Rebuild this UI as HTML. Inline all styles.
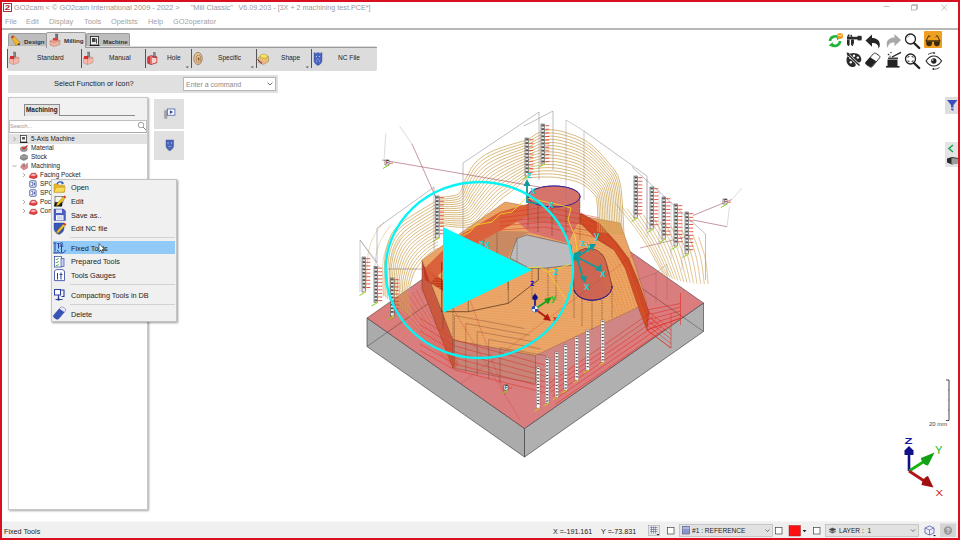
<!DOCTYPE html>
<html>
<head>
<meta charset="utf-8">
<title>GO2cam</title>
<style>
*{box-sizing:border-box;margin:0;padding:0}
html,body{width:960px;height:540px;overflow:hidden;background:#fff}
body{position:relative;font-family:"Liberation Sans","DejaVu Sans",sans-serif;font-size:7px;color:#222}
.abs{position:absolute}
.t{position:absolute;white-space:nowrap;line-height:1}
#frame{position:absolute;left:0;top:0;width:960px;height:540px;border:2px solid #d8101f;border-left-width:2px;pointer-events:none;z-index:50}
#title{left:14px;top:4px;font-size:7.4px;color:#9a9a9a}
.menu{top:17.5px;font-size:7.4px;color:#a2a2a2}
#sep1{left:2px;top:28px;width:956px;height:1.6px;background:#b8b8b8}
.tab{position:absolute;top:33px;height:14px;background:#bdbdbd;border:1px solid #9a9a9a;border-bottom:none;border-radius:2px 2px 0 0;font-size:6.2px;font-weight:bold;color:#333}
.tab span{position:absolute;top:4px;white-space:nowrap}
#toolbar{left:7px;top:46px;width:370px;height:25px;background:#dcdcdc;border-radius:2px}
.tb{position:absolute;top:55px;font-size:6.6px;color:#222;white-space:nowrap;line-height:1}
.tsep{position:absolute;top:49px;width:1px;height:19px;background:#555}
#prompt{left:8px;top:75px;width:270px;height:18px;background:#e0e0e0}
#combo{left:183px;top:77px;width:93px;height:14px;background:#fff;border:1px solid #b5b5b5}
#panel{left:8px;top:97px;width:140px;height:413px;background:#fff;border:1px solid #c8c8c8;box-shadow:1px 1px 2px rgba(0,0,0,.35)}
.tr{position:absolute;font-size:6.4px;color:#222;white-space:nowrap;line-height:1}
.sb{position:absolute;left:154px;width:30px;background:#e0e0e0}
#ctx{left:51px;top:179px;width:126px;height:143px;background:#f0f0f0;border:1px solid #c4c4c4;box-shadow:1px 1px 2px rgba(0,0,0,.4)}
.ci{position:absolute;left:19px;font-size:7.3px;color:#1c1c1c;white-space:nowrap;line-height:1}
.csep{position:absolute;left:18px;width:105px;height:1px;background:#d2d2d2}
#status{left:2px;top:520.5px;width:956px;height:17.500px;background:#f0f0f0;border-top:1px solid #f6f6f6}
.st{position:absolute;font-size:7.2px;color:#222;white-space:nowrap;line-height:1}
</style>
</head>
<body>
<!-- MODEL -->
<svg id="model" class="abs" style="left:0;top:0" width="960" height="540" viewBox="0 0 960 540">
<!--MODEL_START-->
<g id="stock">
<polygon points="367.0,318.0 524.5,428.5 524.5,457.0 367.0,346.5" fill="#ababab" stroke="#333" stroke-width="0.6" opacity="1" />
<polygon points="524.5,428.5 703.5,303.0 703.5,331.5 524.5,457.0" fill="#b0b0b0" stroke="#333" stroke-width="0.6" opacity="1" />
<polygon points="367.0,318.0 546.0,192.5 703.5,303.0 524.5,428.5" fill="#da7d7f" stroke="#333" stroke-width="0.5" opacity="1" />
<polyline points="367.0,346.5 546.0,221.0 703.5,331.5" fill="none" stroke="#2a2020" stroke-width="0.5" opacity="0.75" />
<polyline points="546.0,221.0 546.0,192.5" fill="none" stroke="#2a2020" stroke-width="0.4" opacity="0.5" />
</g>
<g id="part">
<polygon points="535.5,355.5 647.0,303.0 647.0,330.0 535.5,383.5" fill="#d08684" stroke="none" stroke-width="0.5" opacity="1" />
<polygon points="453.0,340.0 535.5,355.5 535.5,383.5 453.0,368.0" fill="#c88478" stroke="#7a3a30" stroke-width="0.4" opacity="1" />
<polygon points="422.0,260.0 453.0,340.0 453.0,368.0 422.0,288.0" fill="#c85a42" stroke="#5a2a20" stroke-width="0.4" opacity="1" />
<polygon points="422.0,260.0 505.0,202.0 620.0,223.0 634.0,262.0 647.0,303.0 535.5,355.5 453.0,340.0" fill="#e9a870" stroke="#8a5030" stroke-width="0.4" opacity="1" />
<polygon points="495.0,231.0 530.0,232.0 517.0,238.0 508.0,258.0 532.0,268.0 500.0,275.0 470.0,262.0 470.0,245.0" fill="#c98a62" stroke="none" stroke-width="0.5" opacity="1" />
<polygon points="528.0,205.0 580.0,208.0 580.0,218.0 568.0,243.0 530.0,232.5 517.0,221.0" fill="#d9736c" stroke="none" stroke-width="0.5" opacity="1" />
<polygon points="425.0,268.0 456.0,238.0 500.0,212.0 528.0,204.0 528.0,216.0 505.0,228.0 462.0,252.0 430.0,283.0" fill="#d9603c" stroke="none" stroke-width="0.5" opacity="0.9" />
<polygon points="510.0,258.0 517.0,238.5 527.0,235.0 571.0,245.0 573.0,265.0 545.0,268.0 530.0,268.5" fill="#bcbcc0" stroke="#444" stroke-width="0.4" opacity="1" />
<polygon points="423.0,266.0 443.0,280.0 445.0,292.0 425.0,280.0" fill="#c03a22" stroke="none" stroke-width="0.5" opacity="1" />
<polygon points="528.0,197.0 580.0,197.0 580.0,224.0 528.0,222.0" fill="#cf6658" stroke="none" stroke-width="0.5" opacity="0.92" />
<ellipse cx="554" cy="196.5" rx="26" ry="10.5" fill="#d5746a" stroke="#2a1a9a" stroke-width="0.9"/>
<path d="M573,262 C573,246 600,242 606,262 L612,286 C612,302 580,306 574,290 Z" fill="#cc6652" stroke="#5a2020" stroke-width="0.5" opacity="1" />
<path d="M574,290 C580,306 612,302 612,286" fill="none" stroke="#2a1a9a" stroke-width="1.0" opacity="1" />
</g>
<defs><clipPath id="cpTop"><polygon points="422.0,260.0 505.0,202.0 620.0,223.0 634.0,262.0 647.0,303.0 535.5,355.5 453.0,340.0"/></clipPath><clipPath id="cpStock"><polygon points="367.0,318.0 546.0,192.5 703.5,303.0 524.5,428.5"/></clipPath></defs>
<g id="hatch" clip-path="url(#cpTop)">
<polyline points="400.0,175.0 664.0,192.6" fill="none" stroke="#ef9436" stroke-width="0.55" opacity="0.8" />
<polyline points="400.0,177.5 664.0,195.1" fill="none" stroke="#ef9436" stroke-width="0.55" opacity="0.8" />
<polyline points="400.0,180.0 664.0,197.6" fill="none" stroke="#ef9436" stroke-width="0.55" opacity="0.8" />
<polyline points="400.0,182.5 664.0,200.1" fill="none" stroke="#ef9436" stroke-width="0.55" opacity="0.8" />
<polyline points="400.0,185.0 664.0,202.6" fill="none" stroke="#ef9436" stroke-width="0.55" opacity="0.8" />
<polyline points="400.0,187.5 664.0,205.1" fill="none" stroke="#ef9436" stroke-width="0.55" opacity="0.8" />
<polyline points="400.0,190.0 664.0,207.6" fill="none" stroke="#ef9436" stroke-width="0.55" opacity="0.8" />
<polyline points="400.0,192.5 664.0,210.1" fill="none" stroke="#ef9436" stroke-width="0.55" opacity="0.8" />
<polyline points="400.0,195.0 664.0,212.6" fill="none" stroke="#ef9436" stroke-width="0.55" opacity="0.8" />
<polyline points="400.0,197.5 664.0,215.1" fill="none" stroke="#ef9436" stroke-width="0.55" opacity="0.8" />
<polyline points="400.0,200.0 664.0,217.6" fill="none" stroke="#ef9436" stroke-width="0.55" opacity="0.8" />
<polyline points="400.0,202.5 664.0,220.1" fill="none" stroke="#ef9436" stroke-width="0.55" opacity="0.8" />
<polyline points="400.0,205.0 664.0,222.6" fill="none" stroke="#ef9436" stroke-width="0.55" opacity="0.8" />
<polyline points="400.0,207.5 664.0,225.1" fill="none" stroke="#ef9436" stroke-width="0.55" opacity="0.8" />
<polyline points="400.0,210.0 664.0,227.6" fill="none" stroke="#ef9436" stroke-width="0.55" opacity="0.8" />
<polyline points="400.0,212.5 664.0,230.1" fill="none" stroke="#ef9436" stroke-width="0.55" opacity="0.8" />
<polyline points="400.0,215.0 664.0,232.6" fill="none" stroke="#ef9436" stroke-width="0.55" opacity="0.8" />
<polyline points="400.0,217.5 664.0,235.1" fill="none" stroke="#ef9436" stroke-width="0.55" opacity="0.8" />
<polyline points="400.0,220.0 664.0,237.6" fill="none" stroke="#ef9436" stroke-width="0.55" opacity="0.8" />
<polyline points="400.0,222.5 664.0,240.1" fill="none" stroke="#ef9436" stroke-width="0.55" opacity="0.8" />
<polyline points="400.0,225.0 664.0,242.6" fill="none" stroke="#ef9436" stroke-width="0.55" opacity="0.8" />
<polyline points="400.0,227.5 664.0,245.1" fill="none" stroke="#ef9436" stroke-width="0.55" opacity="0.8" />
<polyline points="400.0,230.0 664.0,247.6" fill="none" stroke="#ef9436" stroke-width="0.55" opacity="0.8" />
<polyline points="400.0,232.5 664.0,250.1" fill="none" stroke="#ef9436" stroke-width="0.55" opacity="0.8" />
<polyline points="400.0,235.0 664.0,252.6" fill="none" stroke="#ef9436" stroke-width="0.55" opacity="0.8" />
<polyline points="400.0,237.5 664.0,255.1" fill="none" stroke="#ef9436" stroke-width="0.55" opacity="0.8" />
<polyline points="400.0,240.0 664.0,257.6" fill="none" stroke="#ef9436" stroke-width="0.55" opacity="0.8" />
<polyline points="400.0,242.5 664.0,260.1" fill="none" stroke="#ef9436" stroke-width="0.55" opacity="0.8" />
<polyline points="400.0,245.0 664.0,262.6" fill="none" stroke="#ef9436" stroke-width="0.55" opacity="0.8" />
<polyline points="400.0,247.5 664.0,265.1" fill="none" stroke="#ef9436" stroke-width="0.55" opacity="0.8" />
<polyline points="400.0,250.0 664.0,267.6" fill="none" stroke="#ef9436" stroke-width="0.55" opacity="0.8" />
<polyline points="400.0,252.5 664.0,270.1" fill="none" stroke="#ef9436" stroke-width="0.55" opacity="0.8" />
<polyline points="400.0,255.0 664.0,272.6" fill="none" stroke="#ef9436" stroke-width="0.55" opacity="0.8" />
<polyline points="400.0,257.5 664.0,275.1" fill="none" stroke="#ef9436" stroke-width="0.55" opacity="0.8" />
<polyline points="400.0,260.0 664.0,277.6" fill="none" stroke="#ef9436" stroke-width="0.55" opacity="0.8" />
<polyline points="400.0,262.5 664.0,280.1" fill="none" stroke="#ef9436" stroke-width="0.55" opacity="0.8" />
<polyline points="400.0,265.0 664.0,282.6" fill="none" stroke="#ef9436" stroke-width="0.55" opacity="0.8" />
<polyline points="400.0,267.5 664.0,285.1" fill="none" stroke="#ef9436" stroke-width="0.55" opacity="0.8" />
<polyline points="400.0,270.0 664.0,287.6" fill="none" stroke="#ef9436" stroke-width="0.55" opacity="0.8" />
<polyline points="400.0,272.5 664.0,290.1" fill="none" stroke="#ef9436" stroke-width="0.55" opacity="0.8" />
<polyline points="400.0,275.0 664.0,292.6" fill="none" stroke="#ef9436" stroke-width="0.55" opacity="0.8" />
<polyline points="400.0,277.5 664.0,295.1" fill="none" stroke="#ef9436" stroke-width="0.55" opacity="0.8" />
<polyline points="400.0,280.0 664.0,297.6" fill="none" stroke="#ef9436" stroke-width="0.55" opacity="0.8" />
<polyline points="400.0,282.5 664.0,300.1" fill="none" stroke="#ef9436" stroke-width="0.55" opacity="0.8" />
<polyline points="400.0,285.0 664.0,302.6" fill="none" stroke="#ef9436" stroke-width="0.55" opacity="0.8" />
<polyline points="400.0,287.5 664.0,305.1" fill="none" stroke="#ef9436" stroke-width="0.55" opacity="0.8" />
<polyline points="400.0,290.0 664.0,307.6" fill="none" stroke="#ef9436" stroke-width="0.55" opacity="0.8" />
<polyline points="400.0,292.5 664.0,310.1" fill="none" stroke="#ef9436" stroke-width="0.55" opacity="0.8" />
<polyline points="400.0,295.0 664.0,312.6" fill="none" stroke="#ef9436" stroke-width="0.55" opacity="0.8" />
<polyline points="400.0,297.5 664.0,315.1" fill="none" stroke="#ef9436" stroke-width="0.55" opacity="0.8" />
<polyline points="400.0,300.0 664.0,317.6" fill="none" stroke="#ef9436" stroke-width="0.55" opacity="0.8" />
<polyline points="400.0,302.5 664.0,320.1" fill="none" stroke="#ef9436" stroke-width="0.55" opacity="0.8" />
<polyline points="400.0,305.0 664.0,322.6" fill="none" stroke="#ef9436" stroke-width="0.55" opacity="0.8" />
<polyline points="400.0,307.5 664.0,325.1" fill="none" stroke="#ef9436" stroke-width="0.55" opacity="0.8" />
<polyline points="400.0,310.0 664.0,327.6" fill="none" stroke="#ef9436" stroke-width="0.55" opacity="0.8" />
<polyline points="400.0,312.5 664.0,330.1" fill="none" stroke="#ef9436" stroke-width="0.55" opacity="0.8" />
<polyline points="400.0,315.0 664.0,332.6" fill="none" stroke="#ef9436" stroke-width="0.55" opacity="0.8" />
<polyline points="400.0,317.5 664.0,335.1" fill="none" stroke="#ef9436" stroke-width="0.55" opacity="0.8" />
<polyline points="400.0,320.0 664.0,337.6" fill="none" stroke="#ef9436" stroke-width="0.55" opacity="0.8" />
<polyline points="400.0,322.5 664.0,340.1" fill="none" stroke="#ef9436" stroke-width="0.55" opacity="0.8" />
<polyline points="400.0,325.0 664.0,342.6" fill="none" stroke="#ef9436" stroke-width="0.55" opacity="0.8" />
<polyline points="400.0,327.5 664.0,345.1" fill="none" stroke="#ef9436" stroke-width="0.55" opacity="0.8" />
<polyline points="400.0,330.0 664.0,347.6" fill="none" stroke="#ef9436" stroke-width="0.55" opacity="0.8" />
<polyline points="400.0,332.5 664.0,350.1" fill="none" stroke="#ef9436" stroke-width="0.55" opacity="0.8" />
<polyline points="400.0,335.0 664.0,352.6" fill="none" stroke="#ef9436" stroke-width="0.55" opacity="0.8" />
<polyline points="400.0,337.5 664.0,355.1" fill="none" stroke="#ef9436" stroke-width="0.55" opacity="0.8" />
<polyline points="400.0,340.0 664.0,357.6" fill="none" stroke="#ef9436" stroke-width="0.55" opacity="0.8" />
<polyline points="400.0,342.5 664.0,360.1" fill="none" stroke="#ef9436" stroke-width="0.55" opacity="0.8" />
<polyline points="400.0,345.0 664.0,362.6" fill="none" stroke="#ef9436" stroke-width="0.55" opacity="0.8" />
<polyline points="400.0,347.5 664.0,365.1" fill="none" stroke="#ef9436" stroke-width="0.55" opacity="0.8" />
<polyline points="400.0,350.0 664.0,367.6" fill="none" stroke="#ef9436" stroke-width="0.55" opacity="0.8" />
<polyline points="400.0,352.5 664.0,370.1" fill="none" stroke="#ef9436" stroke-width="0.55" opacity="0.8" />
<polyline points="400.0,355.0 664.0,372.6" fill="none" stroke="#ef9436" stroke-width="0.55" opacity="0.8" />
<polyline points="400.0,357.5 664.0,375.1" fill="none" stroke="#ef9436" stroke-width="0.55" opacity="0.8" />
<polyline points="400.0,360.0 664.0,377.6" fill="none" stroke="#ef9436" stroke-width="0.55" opacity="0.8" />
<polyline points="400.0,362.5 664.0,380.1" fill="none" stroke="#ef9436" stroke-width="0.55" opacity="0.8" />
<polyline points="400.0,365.0 664.0,382.6" fill="none" stroke="#ef9436" stroke-width="0.55" opacity="0.8" />
<polyline points="400.0,367.5 664.0,385.1" fill="none" stroke="#ef9436" stroke-width="0.55" opacity="0.8" />
<polyline points="400.0,370.0 664.0,387.6" fill="none" stroke="#ef9436" stroke-width="0.55" opacity="0.8" />
<polyline points="400.0,372.5 664.0,390.1" fill="none" stroke="#ef9436" stroke-width="0.55" opacity="0.8" />
<polyline points="400.0,375.0 664.0,392.6" fill="none" stroke="#ef9436" stroke-width="0.55" opacity="0.8" />
<polyline points="400.0,377.5 664.0,395.1" fill="none" stroke="#ef9436" stroke-width="0.55" opacity="0.8" />
<polyline points="400.0,380.0 664.0,397.6" fill="none" stroke="#ef9436" stroke-width="0.55" opacity="0.8" />
<polyline points="400.0,382.5 664.0,400.1" fill="none" stroke="#ef9436" stroke-width="0.55" opacity="0.8" />
<polyline points="400.0,385.0 664.0,402.6" fill="none" stroke="#ef9436" stroke-width="0.55" opacity="0.8" />
<polyline points="400.0,387.5 664.0,405.1" fill="none" stroke="#ef9436" stroke-width="0.55" opacity="0.8" />
<polyline points="400.0,390.0 664.0,407.6" fill="none" stroke="#ef9436" stroke-width="0.55" opacity="0.8" />
<polyline points="400.0,392.5 664.0,410.1" fill="none" stroke="#ef9436" stroke-width="0.55" opacity="0.8" />
<polyline points="400.0,395.0 664.0,412.6" fill="none" stroke="#ef9436" stroke-width="0.55" opacity="0.8" />
<polyline points="400.0,397.5 664.0,415.1" fill="none" stroke="#ef9436" stroke-width="0.55" opacity="0.8" />
</g>
<polygon points="495.0,231.0 530.0,232.0 517.0,238.0 508.0,258.0 532.0,268.0 500.0,275.0 470.0,262.0 470.0,245.0" fill="#c98a62" stroke="none" stroke-width="0.5" opacity="1" />
<polygon points="528.0,205.0 580.0,208.0 580.0,218.0 568.0,243.0 530.0,232.5 517.0,221.0" fill="#d9736c" stroke="none" stroke-width="0.5" opacity="1" />
<polygon points="425.0,268.0 456.0,238.0 500.0,212.0 528.0,204.0 528.0,216.0 505.0,228.0 462.0,252.0 430.0,283.0" fill="#d9603c" stroke="none" stroke-width="0.5" opacity="0.9" />
<polygon points="510.0,258.0 517.0,238.5 527.0,235.0 571.0,245.0 573.0,265.0 545.0,268.0 530.0,268.5" fill="#bcbcc0" stroke="#444" stroke-width="0.4" opacity="1" />
<polygon points="581.0,213.0 600.0,224.0 617.0,243.0 629.0,259.0 638.0,280.0 645.0,300.0 649.0,312.0 647.0,330.0 640.0,312.0 633.0,292.0 629.0,280.0 625.0,268.0 614.0,250.0 597.0,239.5 577.0,220.0" fill="#cc4a28" stroke="#7a2a1a" stroke-width="0.3" opacity="1" />
<polyline points="580.0,216.0 599.0,230.0 616.0,247.0 627.0,266.0 636.0,290.0 646.0,322.0" fill="none" stroke="#f05a18" stroke-width="0.7" opacity="0.9" />
<polyline points="579.0,218.5 598.0,234.0 615.0,249.0 626.0,270.0 634.0,292.0 645.0,324.0" fill="none" stroke="#f05a18" stroke-width="0.6" opacity="0.8" />
<polygon points="528.0,197.0 580.0,197.0 580.0,224.0 528.0,222.0" fill="#cf6658" stroke="none" stroke-width="0.5" opacity="0.92" />
<ellipse cx="554" cy="196.5" rx="26" ry="10.5" fill="#d5746a" stroke="#2a1a9a" stroke-width="0.9"/>
<path d="M573,262 C573,246 600,242 606,262 L612,286 C612,302 580,306 574,290 Z" fill="#cc6652" stroke="#5a2020" stroke-width="0.5" opacity="1" />
<path d="M574,290 C580,306 612,302 612,286" fill="none" stroke="#2a1a9a" stroke-width="1.0" opacity="1" />
<polyline points="500.0,214.0 545.0,207.0 600.0,218.0" fill="none" stroke="#e0301c" stroke-width="0.6" opacity="0.8" />
<polyline points="500.0,218.0 545.0,212.0 600.0,223.0" fill="none" stroke="#e0301c" stroke-width="0.6" opacity="0.8" />
<polyline points="500.0,222.0 545.0,217.0 600.0,228.0" fill="none" stroke="#e0301c" stroke-width="0.6" opacity="0.8" />
<polyline points="500.0,226.0 545.0,222.0 600.0,233.0" fill="none" stroke="#e0301c" stroke-width="0.6" opacity="0.8" />
<polyline points="500.0,230.0 545.0,227.0 600.0,238.0" fill="none" stroke="#e0301c" stroke-width="0.6" opacity="0.8" />
<polyline points="470.0,246.0 470.0,285.0" fill="none" stroke="#2a1a10" stroke-width="0.5" opacity="0.8" stroke-dasharray="1.6 0.8"/>
<polyline points="484.0,240.0 484.0,280.0" fill="none" stroke="#2a1a10" stroke-width="0.5" opacity="0.8" stroke-dasharray="1.6 0.8"/>
<polyline points="497.0,233.0 497.0,276.0" fill="none" stroke="#2a1a10" stroke-width="0.5" opacity="0.8" stroke-dasharray="1.6 0.8"/>
<polyline points="517.0,238.0 517.0,262.0" fill="none" stroke="#2a1a10" stroke-width="0.5" opacity="0.8" stroke-dasharray="1.6 0.8"/>
<polyline points="508.0,258.0 508.0,290.0" fill="none" stroke="#2a1a10" stroke-width="0.5" opacity="0.8" stroke-dasharray="1.6 0.8"/>
<polyline points="532.0,268.0 532.0,300.0" fill="none" stroke="#2a1a10" stroke-width="0.5" opacity="0.8" stroke-dasharray="1.6 0.8"/>
<polyline points="548.0,268.0 548.0,302.0" fill="none" stroke="#2a1a10" stroke-width="0.5" opacity="0.8" stroke-dasharray="1.6 0.8"/>
<polyline points="556.0,268.0 556.0,300.0" fill="none" stroke="#2a1a10" stroke-width="0.5" opacity="0.8" stroke-dasharray="1.6 0.8"/>
<polyline points="528.0,197.0 528.0,228.0" fill="none" stroke="#2a1a10" stroke-width="0.5" opacity="0.8" stroke-dasharray="1.6 0.8"/>
<polyline points="538.0,204.0 538.0,232.0" fill="none" stroke="#2a1a10" stroke-width="0.5" opacity="0.8" stroke-dasharray="1.6 0.8"/>
<polyline points="552.0,207.0 552.0,236.0" fill="none" stroke="#2a1a10" stroke-width="0.5" opacity="0.8" stroke-dasharray="1.6 0.8"/>
<polyline points="566.0,206.0 566.0,236.0" fill="none" stroke="#2a1a10" stroke-width="0.5" opacity="0.8" stroke-dasharray="1.6 0.8"/>
<polyline points="580.0,197.0 580.0,240.0" fill="none" stroke="#2a1a10" stroke-width="0.5" opacity="0.8" stroke-dasharray="1.6 0.8"/>
<polyline points="574.0,290.0 574.0,318.0" fill="none" stroke="#2a1a10" stroke-width="0.5" opacity="0.8" stroke-dasharray="1.6 0.8"/>
<polyline points="582.0,298.0 582.0,326.0" fill="none" stroke="#2a1a10" stroke-width="0.5" opacity="0.8" stroke-dasharray="1.6 0.8"/>
<polyline points="592.0,301.0 592.0,330.0" fill="none" stroke="#2a1a10" stroke-width="0.5" opacity="0.8" stroke-dasharray="1.6 0.8"/>
<polyline points="602.0,300.0 602.0,328.0" fill="none" stroke="#2a1a10" stroke-width="0.5" opacity="0.8" stroke-dasharray="1.6 0.8"/>
<polyline points="612.0,286.0 612.0,318.0" fill="none" stroke="#2a1a10" stroke-width="0.5" opacity="0.8" stroke-dasharray="1.6 0.8"/>
<polyline points="443.0,283.0 443.0,330.0" fill="none" stroke="#2a1a10" stroke-width="0.5" opacity="0.8" stroke-dasharray="1.6 0.8"/>
<polyline points="453.0,290.0 453.0,340.0" fill="none" stroke="#2a1a10" stroke-width="0.5" opacity="0.8" stroke-dasharray="1.6 0.8"/>
<g clip-path="url(#cpStock)">
<polyline points="548.0,384.0 650.0,313.0" fill="none" stroke="#e2281c" stroke-width="0.6" opacity="0.85" />
<polyline points="549.5,388.0 653.0,316.2" fill="none" stroke="#e2281c" stroke-width="0.6" opacity="0.85" />
<polyline points="551.0,392.0 656.0,319.4" fill="none" stroke="#e2281c" stroke-width="0.6" opacity="0.85" />
<polyline points="552.5,396.0 659.0,322.6" fill="none" stroke="#e2281c" stroke-width="0.6" opacity="0.85" />
<polyline points="554.0,400.0 662.0,325.8" fill="none" stroke="#e2281c" stroke-width="0.6" opacity="0.85" />
<polyline points="555.5,404.0 665.0,329.0" fill="none" stroke="#e2281c" stroke-width="0.6" opacity="0.85" />
<polyline points="557.0,408.0 668.0,332.2" fill="none" stroke="#e2281c" stroke-width="0.6" opacity="0.85" />
</g>
<polyline points="647.0,310.0 680.5,303.5" fill="none" stroke="#e2281c" stroke-width="0.6" opacity="0.9" />
<polyline points="647.0,310.0 671.0,330.0" fill="none" stroke="#e2281c" stroke-width="0.6" opacity="0.9" />
<polyline points="647.0,315.0 680.5,307.2" fill="none" stroke="#e2281c" stroke-width="0.6" opacity="0.9" />
<polyline points="647.0,315.0 671.0,334.5" fill="none" stroke="#e2281c" stroke-width="0.6" opacity="0.9" />
<polyline points="647.0,320.0 680.5,310.9" fill="none" stroke="#e2281c" stroke-width="0.6" opacity="0.9" />
<polyline points="647.0,320.0 671.0,339.0" fill="none" stroke="#e2281c" stroke-width="0.6" opacity="0.9" />
<polyline points="647.0,325.0 680.5,314.6" fill="none" stroke="#e2281c" stroke-width="0.6" opacity="0.9" />
<polyline points="647.0,325.0 671.0,343.5" fill="none" stroke="#e2281c" stroke-width="0.6" opacity="0.9" />
<polyline points="647.0,330.0 680.5,318.3" fill="none" stroke="#e2281c" stroke-width="0.6" opacity="0.9" />
<polyline points="647.0,330.0 671.0,348.0" fill="none" stroke="#e2281c" stroke-width="0.6" opacity="0.9" />
<polyline points="680.5,293.0 680.5,325.0" fill="none" stroke="#e2281c" stroke-width="0.6" opacity="0.9" />
<polyline points="671.0,313.7 671.0,348.0 647.0,330.0" fill="none" stroke="#e2281c" stroke-width="0.6" opacity="0.9" />
<polyline points="647.0,330.0 680.5,318.0" fill="none" stroke="#e2281c" stroke-width="0.6" opacity="0.9" />
<polyline points="632.0,282.0 656.0,273.0 667.0,264.0 667.0,300.0" fill="none" stroke="#8a5a5a" stroke-width="0.4" opacity="0.8" />
<polyline points="656.0,273.0 656.0,303.0" fill="none" stroke="#8a5a5a" stroke-width="0.4" opacity="0.8" />
<g clip-path="url(#cpStock)">
<polyline points="420.0,318.0 455.0,340.0 548.0,366.0" fill="none" stroke="#e03424" stroke-width="0.6" opacity="0.9" />
<polyline points="420.0,324.5 455.0,346.0 548.0,371.5" fill="none" stroke="#e03424" stroke-width="0.6" opacity="0.9" />
<polyline points="420.0,331.0 455.0,352.0 548.0,377.0" fill="none" stroke="#e03424" stroke-width="0.6" opacity="0.9" />
<polyline points="420.0,337.5 455.0,358.0 548.0,382.5" fill="none" stroke="#e03424" stroke-width="0.6" opacity="0.9" />
<polyline points="420.0,344.0 455.0,364.0 548.0,388.0" fill="none" stroke="#e03424" stroke-width="0.6" opacity="0.9" />
<polyline points="420.0,350.5 455.0,370.0 548.0,393.5" fill="none" stroke="#e03424" stroke-width="0.6" opacity="0.9" />
<polyline points="391.0,303.0 455.0,369.0" fill="none" stroke="#e0502a" stroke-width="0.55" opacity="0.85" />
<polyline points="395.2,300.8 455.4,368.4" fill="none" stroke="#e0502a" stroke-width="0.55" opacity="0.85" />
<polyline points="399.4,298.6 455.8,367.8" fill="none" stroke="#e0502a" stroke-width="0.55" opacity="0.85" />
<polyline points="403.6,296.4 456.2,367.2" fill="none" stroke="#e0502a" stroke-width="0.55" opacity="0.85" />
<polyline points="407.8,294.2 456.6,366.6" fill="none" stroke="#e0502a" stroke-width="0.55" opacity="0.85" />
<polyline points="412.0,292.0 457.0,366.0" fill="none" stroke="#e0502a" stroke-width="0.55" opacity="0.85" />
<polyline points="416.2,289.8 457.4,365.4" fill="none" stroke="#e0502a" stroke-width="0.55" opacity="0.85" />
<polyline points="420.4,287.6 457.8,364.8" fill="none" stroke="#e0502a" stroke-width="0.55" opacity="0.85" />
<polyline points="424.6,285.4 458.2,364.2" fill="none" stroke="#e0502a" stroke-width="0.55" opacity="0.85" />
<polyline points="372.0,316.0 408.0,292.0" fill="none" stroke="#e8782c" stroke-width="0.5" opacity="0.7" />
<polyline points="378.0,320.3 413.0,296.6" fill="none" stroke="#e8782c" stroke-width="0.5" opacity="0.7" />
<polyline points="384.0,324.6 418.0,301.2" fill="none" stroke="#e8782c" stroke-width="0.5" opacity="0.7" />
<polyline points="390.0,328.9 423.0,305.8" fill="none" stroke="#e8782c" stroke-width="0.5" opacity="0.7" />
<polyline points="396.0,333.2 428.0,310.4" fill="none" stroke="#e8782c" stroke-width="0.5" opacity="0.7" />
<polyline points="402.0,337.5 433.0,315.0" fill="none" stroke="#e8782c" stroke-width="0.5" opacity="0.7" />
<polyline points="425.0,262.0 520.0,420.0" fill="none" stroke="#d03030" stroke-width="0.4" opacity="0.7" />
<polyline points="640.0,250.0 455.0,388.0" fill="none" stroke="#d03030" stroke-width="0.4" opacity="0.7" />
<polyline points="470.0,300.0 505.0,395.0" fill="none" stroke="#d03030" stroke-width="0.4" opacity="0.7" />
</g>
<g clip-path="url(#cpTop)">
<polyline points="578.3,222.2 579.6,223.8 581.3,226.0 583.3,228.6 585.6,231.4 588.0,234.3 590.4,237.2 592.8,239.7 595.0,241.9 597.2,243.5 599.4,244.9 601.7,246.0 604.0,247.0 606.2,248.0 608.3,249.1 610.3,250.5 612.1,252.2 613.8,254.2 615.3,256.5 616.6,258.9 617.9,261.5 619.1,264.2 620.3,266.9 621.4,269.5 622.6,272.1 623.7,274.5 624.6,276.7 625.6,278.9 626.5,281.2 627.4,283.5 628.3,286.0 629.3,288.8 630.4,292.0 631.7,295.8 633.2,300.3 634.8,305.2 636.4,310.2 637.9,315.1 639.3,319.6 640.5,323.3 641.4,326.0" fill="none" stroke="#ee7e26" stroke-width="0.5" opacity="0.8" />
<polyline points="577.6,225.5 578.7,227.0 580.3,229.2 582.2,231.7 584.3,234.5 586.5,237.4 588.8,240.2 591.0,242.7 593.0,244.8 595.1,246.4 597.2,247.6 599.3,248.6 601.5,249.6 603.6,250.5 605.6,251.5 607.5,252.7 609.2,254.3 610.8,256.2 612.2,258.4 613.5,260.7 614.7,263.2 615.9,265.7 617.0,268.2 618.1,270.7 619.2,273.2 620.2,275.4 621.2,277.5 622.0,279.6 622.9,281.6 623.8,283.8 624.7,286.2 625.7,288.9 626.8,292.0 628.1,295.8 629.6,300.2 631.2,305.1 632.8,310.2 634.3,315.1 635.7,319.5 636.9,323.3 637.8,326.0" fill="none" stroke="#ee7e26" stroke-width="0.5" opacity="0.8" />
<polyline points="576.8,228.7 577.9,230.2 579.4,232.4 581.1,234.9 583.0,237.6 585.0,240.5 587.1,243.2 589.1,245.6 591.1,247.6 593.0,249.2 594.9,250.3 597.0,251.3 599.0,252.1 601.0,253.0 602.9,253.9 604.7,255.0 606.4,256.5 607.8,258.3 609.2,260.3 610.4,262.5 611.5,264.8 612.6,267.2 613.7,269.6 614.7,272.0 615.7,274.2 616.7,276.3 617.7,278.3 618.5,280.2 619.4,282.1 620.2,284.2 621.1,286.4 622.1,289.0 623.2,292.0 624.5,295.7 626.0,300.2 627.5,305.1 629.2,310.1 630.7,315.0 632.1,319.5 633.3,323.3 634.2,326.0" fill="none" stroke="#ee7e26" stroke-width="0.5" opacity="0.8" />
<polyline points="576.1,232.0 577.1,233.5 578.4,235.5 580.0,238.0 581.7,240.7 583.5,243.5 585.4,246.2 587.3,248.6 589.1,250.5 590.8,252.0 592.7,253.1 594.6,254.0 596.5,254.7 598.4,255.4 600.2,256.3 601.9,257.3 603.5,258.6 604.9,260.3 606.1,262.2 607.3,264.3 608.3,266.4 609.4,268.7 610.4,270.9 611.3,273.2 612.3,275.3 613.3,277.3 614.2,279.1 615.0,280.8 615.8,282.6 616.7,284.5 617.6,286.6 618.5,289.1 619.6,292.0 620.9,295.7 622.3,300.1 623.9,305.0 625.6,310.0 627.1,315.0 628.5,319.5 629.7,323.3 630.6,326.0" fill="none" stroke="#ee7e26" stroke-width="0.5" opacity="0.8" />
<polyline points="575.4,235.2 576.3,236.7 577.5,238.7 578.9,241.2 580.4,243.8 582.1,246.6 583.8,249.2 585.5,251.5 587.1,253.4 588.7,254.8 590.5,255.8 592.3,256.6 594.1,257.3 595.8,257.9 597.5,258.6 599.1,259.6 600.6,260.8 601.9,262.4 603.1,264.1 604.1,266.0 605.1,268.1 606.1,270.2 607.0,272.3 608.0,274.4 608.9,276.4 609.8,278.2 610.7,279.9 611.5,281.4 612.3,283.0 613.1,284.8 614.0,286.8 614.9,289.2 616.0,292.0 617.3,295.6 618.7,300.0 620.3,304.9 621.9,310.0 623.5,314.9 624.9,319.5 626.1,323.3 627.0,326.0" fill="none" stroke="#ee7e26" stroke-width="0.5" opacity="0.8" />
<polyline points="574.7,238.4 575.5,239.9 576.5,241.9 577.7,244.3 579.1,246.9 580.6,249.6 582.1,252.2 583.6,254.5 585.1,256.3 586.6,257.6 588.2,258.6 589.9,259.3 591.6,259.8 593.3,260.4 594.9,261.0 596.4,261.8 597.7,263.0 598.9,264.4 600.0,266.0 601.0,267.8 602.0,269.7 602.8,271.7 603.7,273.7 604.6,275.6 605.5,277.5 606.4,279.2 607.2,280.7 608.0,282.1 608.7,283.5 609.5,285.1 610.4,287.0 611.3,289.3 612.4,292.0 613.7,295.6 615.1,299.9 616.7,304.8 618.3,309.9 619.9,314.9 621.3,319.4 622.5,323.2 623.4,326.0" fill="none" stroke="#ee7e26" stroke-width="0.5" opacity="0.8" />
<polyline points="574.0,241.7 574.7,243.1 575.6,245.1 576.6,247.5 577.8,250.0 579.1,252.7 580.5,255.2 581.8,257.4 583.1,259.2 584.5,260.4 586.0,261.3 587.5,261.9 589.1,262.4 590.7,262.8 592.2,263.4 593.6,264.1 594.8,265.1 596.0,266.4 597.0,268.0 597.9,269.6 598.8,271.4 599.6,273.2 600.4,275.0 601.2,276.8 602.1,278.6 602.9,280.1 603.7,281.4 604.4,282.7 605.2,284.0 606.0,285.5 606.8,287.2 607.8,289.3 608.8,292.0 610.0,295.5 611.5,299.9 613.1,304.7 614.7,309.8 616.3,314.8 617.7,319.4 618.9,323.2 619.8,326.0" fill="none" stroke="#ee7e26" stroke-width="0.5" opacity="0.8" />
</g>
<polyline points="441.7,262.0 441.7,311.7 468.3,311.7 508.3,303.3 538.3,280.0 538.3,268.3" fill="none" stroke="#3a2010" stroke-width="0.7" opacity="0.9" />
<polyline points="468.3,311.7 468.3,290.0" fill="none" stroke="#3a2010" stroke-width="0.5" opacity="0.8" />
<polyline points="508.3,303.3 508.3,272.0" fill="none" stroke="#3a2010" stroke-width="0.5" opacity="0.8" />
<polyline points="454.4,367.5 454.4,315.5 524.4,328.5" fill="none" stroke="#6a3a30" stroke-width="0.45" opacity="0.8" />
<polyline points="465.8,371.5 465.8,323.5 529.8,335.3" fill="none" stroke="#6a3a30" stroke-width="0.45" opacity="0.8" />
<polyline points="477.2,375.5 477.2,331.5 535.2,342.1" fill="none" stroke="#6a3a30" stroke-width="0.45" opacity="0.8" />
<polyline points="488.6,379.5 488.6,339.5 540.6,348.9" fill="none" stroke="#6a3a30" stroke-width="0.45" opacity="0.8" />
<polyline points="500.0,383.5 500.0,347.5 546.0,355.7" fill="none" stroke="#6a3a30" stroke-width="0.45" opacity="0.8" />
<polyline points="458.0,238.0 470.0,232.0 476.0,225.0 492.0,222.0 500.0,214.0 512.0,212.0 520.0,204.0 526.0,198.0" fill="none" stroke="#f2e020" stroke-width="0.8" opacity="1" />
<polyline points="526.0,198.0 552.0,203.0 571.0,208.0 568.0,220.0 575.0,236.0 577.0,250.0" fill="none" stroke="#f2e020" stroke-width="0.8" opacity="1" />
<polyline points="525.0,268.0 540.0,267.0 548.0,272.0 560.0,268.0 570.0,264.0" fill="none" stroke="#f2e020" stroke-width="0.8" opacity="1" />
<polyline points="548.0,272.0 556.0,284.0 566.0,300.0" fill="none" stroke="#f2e020" stroke-width="0.7" opacity="1" />
<g id="paths">
<polyline points="412.0,318.0 411.7,316.2 411.3,313.8 410.8,310.9 410.2,307.8 409.7,304.4 409.3,301.1 409.1,297.9 409.0,295.0 409.1,292.3 409.4,289.6 409.8,287.0 410.3,284.4 410.9,281.9 411.6,279.4 412.3,277.1 413.0,275.0 413.8,273.0 414.7,271.2 415.7,269.4 416.7,267.8 417.8,266.3 418.8,264.8 419.9,263.4 421.0,262.0 422.1,260.7 423.2,259.4 424.3,258.2 425.5,257.0 426.7,255.9 427.8,254.9 428.9,253.9 430.0,253.0 431.1,252.1 432.3,251.4 433.4,250.6 434.6,249.9 435.6,249.3 436.6,248.8 437.4,248.4 438.0,248.0" fill="none" stroke="#cda253" stroke-width="0.8" opacity="0.95" />
<polyline points="410.1,316.5 409.9,314.7 409.5,312.2 409.0,309.2 408.5,305.9 408.0,302.5 407.7,299.0 407.4,295.7 407.4,292.8 407.5,290.1 407.8,287.4 408.2,284.7 408.7,282.2 409.3,279.7 409.9,277.3 410.6,275.0 411.3,272.9 412.1,270.9 413.0,269.0 414.0,267.3 415.0,265.6 416.0,264.1 417.1,262.6 418.2,261.1 419.3,259.7 420.5,258.4 421.6,257.1 422.8,255.8 424.0,254.6 425.3,253.5 426.5,252.4 427.7,251.4 428.9,250.5 430.1,249.5 431.4,248.7 432.7,247.8 434.0,247.1 435.3,246.4 436.4,245.7 437.3,245.2 438.0,244.8" fill="none" stroke="#cda253" stroke-width="0.8" opacity="0.95" />
<polyline points="408.3,315.1 408.0,313.1 407.7,310.6 407.2,307.5 406.8,304.1 406.3,300.5 406.0,297.0 405.8,293.6 405.7,290.6 405.9,287.9 406.2,285.2 406.6,282.5 407.0,280.0 407.6,277.5 408.2,275.1 408.9,272.9 409.7,270.7 410.5,268.7 411.3,266.9 412.3,265.1 413.3,263.5 414.3,261.9 415.4,260.4 416.5,258.9 417.7,257.5 418.8,256.1 420.0,254.7 421.3,253.5 422.6,252.3 423.9,251.1 425.2,250.0 426.5,248.9 427.7,247.9 429.1,246.9 430.5,246.0 432.0,245.0 433.5,244.2 434.9,243.4 436.2,242.7 437.2,242.1 438.0,241.6" fill="none" stroke="#cda253" stroke-width="0.8" opacity="0.95" />
<polyline points="406.4,313.6 406.2,311.6 405.8,308.9 405.4,305.8 405.0,302.2 404.6,298.6 404.3,294.9 404.1,291.5 404.1,288.4 404.3,285.6 404.6,282.9 404.9,280.3 405.4,277.8 406.0,275.3 406.6,273.0 407.3,270.7 408.0,268.6 408.8,266.6 409.6,264.7 410.6,262.9 411.6,261.3 412.6,259.7 413.7,258.1 414.8,256.7 416.0,255.2 417.2,253.8 418.4,252.4 419.7,251.1 421.1,249.9 422.5,248.7 423.8,247.6 425.2,246.5 426.6,245.4 428.1,244.3 429.7,243.3 431.3,242.3 433.0,241.3 434.5,240.4 435.9,239.6 437.1,238.9 438.0,238.4" fill="none" stroke="#cda253" stroke-width="0.8" opacity="0.95" />
<polyline points="404.5,312.1 404.3,310.1 404.0,307.3 403.7,304.0 403.3,300.4 402.9,296.6 402.6,292.9 402.5,289.3 402.5,286.2 402.7,283.4 402.9,280.7 403.3,278.1 403.8,275.6 404.3,273.1 404.9,270.8 405.6,268.6 406.3,266.5 407.1,264.5 408.0,262.6 408.9,260.8 409.9,259.1 410.9,257.5 412.0,255.9 413.2,254.4 414.3,252.9 415.6,251.5 416.9,250.1 418.2,248.8 419.6,247.5 421.1,246.3 422.5,245.1 424.0,244.0 425.5,242.9 427.1,241.7 428.8,240.6 430.6,239.5 432.4,238.4 434.2,237.4 435.7,236.5 437.0,235.8 438.0,235.2" fill="none" stroke="#cda253" stroke-width="0.8" opacity="0.95" />
<polyline points="402.7,310.7 402.5,308.6 402.2,305.7 401.9,302.3 401.5,298.6 401.2,294.7 401.0,290.8 400.8,287.2 400.9,284.0 401.0,281.2 401.3,278.5 401.7,275.8 402.2,273.4 402.7,271.0 403.3,268.7 404.0,266.5 404.7,264.3 405.4,262.3 406.3,260.4 407.2,258.6 408.2,256.9 409.2,255.3 410.3,253.7 411.5,252.2 412.7,250.7 413.9,249.2 415.3,247.8 416.7,246.5 418.1,245.2 419.7,243.9 421.2,242.7 422.8,241.5 424.3,240.3 426.0,239.1 427.9,237.9 429.9,236.7 431.9,235.5 433.8,234.4 435.5,233.5 436.9,232.6 438.0,232.0" fill="none" stroke="#cda253" stroke-width="0.8" opacity="0.95" />
<polyline points="400.8,309.2 400.6,307.0 400.4,304.1 400.1,300.6 399.8,296.7 399.5,292.7 399.3,288.7 399.2,285.0 399.2,281.8 399.4,278.9 399.7,276.2 400.1,273.6 400.5,271.1 401.0,268.8 401.6,266.5 402.3,264.3 403.0,262.2 403.8,260.2 404.6,258.3 405.5,256.5 406.5,254.7 407.5,253.1 408.6,251.5 409.8,249.9 411.0,248.4 412.3,246.9 413.7,245.5 415.2,244.1 416.7,242.8 418.2,241.5 419.9,240.3 421.5,239.0 423.2,237.8 425.0,236.5 427.1,235.2 429.2,233.9 431.4,232.6 433.4,231.4 435.3,230.4 436.8,229.5 438.0,228.8" fill="none" stroke="#cda253" stroke-width="0.8" opacity="0.95" />
<polyline points="398.9,307.7 398.8,305.5 398.6,302.5 398.3,298.9 398.0,294.9 397.8,290.8 397.6,286.7 397.5,282.9 397.6,279.6 397.8,276.7 398.1,274.0 398.5,271.4 398.9,268.9 399.4,266.6 400.0,264.4 400.6,262.2 401.3,260.1 402.1,258.0 402.9,256.1 403.8,254.3 404.8,252.6 405.8,250.9 406.9,249.3 408.1,247.7 409.3,246.1 410.7,244.6 412.1,243.2 413.6,241.8 415.2,240.4 416.8,239.1 418.5,237.8 420.3,236.5 422.1,235.3 424.0,233.9 426.2,232.5 428.5,231.1 430.8,229.8 433.1,228.5 435.1,227.3 436.7,226.3 438.0,225.6" fill="none" stroke="#cda253" stroke-width="0.8" opacity="0.95" />
<polyline points="397.1,306.3 397.0,304.0 396.8,300.9 396.5,297.1 396.3,293.0 396.1,288.8 395.9,284.6 395.9,280.8 396.0,277.4 396.2,274.5 396.5,271.7 396.8,269.2 397.3,266.7 397.8,264.4 398.3,262.2 399.0,260.0 399.7,257.9 400.4,255.9 401.2,254.0 402.1,252.1 403.1,250.4 404.1,248.7 405.2,247.1 406.4,245.4 407.7,243.9 409.0,242.3 410.5,240.9 412.1,239.4 413.7,238.1 415.4,236.7 417.2,235.4 419.1,234.1 420.9,232.7 423.0,231.3 425.3,229.9 427.8,228.3 430.3,226.9 432.7,225.5 434.8,224.2 436.7,223.2 438.0,222.4" fill="none" stroke="#cda253" stroke-width="0.8" opacity="0.95" />
<polyline points="395.2,304.8 395.1,302.4 394.9,299.2 394.7,295.4 394.6,291.2 394.4,286.9 394.3,282.6 394.3,278.6 394.4,275.2 394.6,272.3 394.9,269.5 395.2,266.9 395.6,264.5 396.1,262.2 396.7,260.0 397.3,257.9 398.0,255.8 398.8,253.8 399.6,251.8 400.4,250.0 401.4,248.2 402.4,246.5 403.5,244.8 404.7,243.2 406.0,241.6 407.4,240.0 408.9,238.5 410.6,237.1 412.3,235.7 414.0,234.3 415.9,233.0 417.8,231.6 419.8,230.2 422.0,228.7 424.5,227.2 427.1,225.6 429.8,224.0 432.3,222.5 434.6,221.2 436.6,220.0 438.0,219.2" fill="none" stroke="#cda253" stroke-width="0.8" opacity="0.95" />
<polyline points="393.3,303.3 393.3,300.9 393.1,297.6 393.0,293.7 392.8,289.4 392.7,284.9 392.6,280.5 392.6,276.5 392.7,273.0 393.0,270.0 393.2,267.3 393.6,264.7 394.0,262.3 394.5,260.1 395.0,257.9 395.6,255.8 396.3,253.7 397.1,251.6 397.9,249.7 398.7,247.8 399.7,246.0 400.7,244.3 401.8,242.6 403.0,241.0 404.3,239.3 405.8,237.7 407.4,236.2 409.0,234.8 410.8,233.3 412.6,231.9 414.6,230.5 416.6,229.1 418.7,227.7 421.0,226.1 423.6,224.5 426.4,222.8 429.2,221.1 431.9,219.5 434.4,218.1 436.5,216.9 438.0,216.0" fill="none" stroke="#cda253" stroke-width="0.8" opacity="0.95" />
<polyline points="391.5,301.9 391.4,299.4 391.3,296.0 391.2,292.0 391.1,287.5 391.0,283.0 390.9,278.5 391.0,274.3 391.1,270.8 391.3,267.8 391.6,265.0 392.0,262.5 392.4,260.1 392.8,257.9 393.4,255.7 394.0,253.6 394.7,251.5 395.4,249.5 396.2,247.5 397.0,245.6 398.0,243.8 399.0,242.1 400.1,240.4 401.3,238.7 402.7,237.1 404.2,235.5 405.8,233.9 407.5,232.4 409.3,231.0 411.2,229.5 413.3,228.1 415.4,226.6 417.5,225.1 420.0,223.5 422.7,221.8 425.7,220.0 428.7,218.2 431.6,216.5 434.2,215.0 436.4,213.8 438.0,212.8" fill="none" stroke="#cda253" stroke-width="0.8" opacity="0.95" />
<polyline points="389.6,300.4 389.6,297.9 389.5,294.4 389.4,290.3 389.3,285.7 389.3,281.0 389.3,276.4 389.3,272.2 389.5,268.6 389.7,265.6 390.0,262.8 390.3,260.3 390.7,257.9 391.2,255.7 391.7,253.6 392.3,251.5 393.0,249.4 393.7,247.3 394.5,245.4 395.3,243.5 396.3,241.7 397.3,239.9 398.4,238.2 399.6,236.5 401.0,234.8 402.5,233.2 404.2,231.6 406.0,230.1 407.9,228.6 409.8,227.1 411.9,225.7 414.1,224.1 416.4,222.6 419.0,220.9 421.9,219.1 425.0,217.2 428.2,215.3 431.2,213.6 434.0,212.0 436.3,210.6 438.0,209.6" fill="none" stroke="#cda253" stroke-width="0.8" opacity="0.95" />
<polyline points="387.7,298.9 387.7,296.3 387.7,292.8 387.6,288.5 387.6,283.9 387.6,279.0 387.6,274.4 387.7,270.0 387.9,266.4 388.1,263.3 388.4,260.6 388.7,258.1 389.1,255.7 389.5,253.5 390.1,251.4 390.7,249.4 391.3,247.3 392.1,245.2 392.8,243.2 393.7,241.3 394.6,239.5 395.6,237.7 396.7,236.0 397.9,234.2 399.3,232.5 400.9,230.9 402.6,229.3 404.4,227.7 406.4,226.2 408.4,224.7 410.6,223.2 412.9,221.7 415.3,220.1 417.9,218.3 421.0,216.4 424.3,214.4 427.6,212.5 430.8,210.6 433.8,208.9 436.2,207.5 438.0,206.4" fill="none" stroke="#cda253" stroke-width="0.8" opacity="0.95" />
<polyline points="385.9,297.5 385.9,294.8 385.9,291.2 385.8,286.8 385.8,282.0 385.9,277.1 385.9,272.3 386.0,267.9 386.2,264.2 386.5,261.1 386.8,258.3 387.1,255.8 387.5,253.5 387.9,251.4 388.4,249.3 389.0,247.2 389.7,245.1 390.4,243.1 391.1,241.1 392.0,239.2 392.9,237.3 393.8,235.5 395.0,233.7 396.2,232.0 397.7,230.3 399.3,228.6 401.0,227.0 402.9,225.4 404.9,223.9 407.0,222.3 409.3,220.8 411.7,219.2 414.1,217.5 416.9,215.7 420.1,213.7 423.6,211.6 427.1,209.6 430.5,207.6 433.5,205.8 436.1,204.3 438.0,203.2" fill="none" stroke="#cda253" stroke-width="0.8" opacity="0.95" />
<polyline points="384.0,296.0 384.0,293.3 384.0,289.5 384.1,285.1 384.1,280.2 384.1,275.1 384.2,270.2 384.4,265.8 384.6,262.0 384.9,258.9 385.1,256.1 385.5,253.6 385.8,251.3 386.3,249.2 386.8,247.1 387.3,245.1 388.0,243.0 388.7,240.9 389.5,238.9 390.3,237.0 391.1,235.1 392.1,233.3 393.3,231.5 394.5,229.8 396.0,228.0 397.6,226.3 399.4,224.7 401.4,223.1 403.4,221.5 405.6,219.9 408.0,218.3 410.4,216.7 413.0,215.0 415.9,213.1 419.3,211.0 422.9,208.9 426.6,206.7 430.1,204.6 433.3,202.7 436.0,201.2 438.0,200.0" fill="none" stroke="#cda253" stroke-width="0.8" opacity="0.95" />
<polyline points="392.0,300.0 391.8,297.6 391.5,294.4 391.1,290.5 390.8,286.2 390.4,281.8 390.1,277.5 390.0,273.5 390.0,270.0 390.2,267.0 390.4,264.2 390.8,261.7 391.2,259.2 391.8,256.9 392.4,254.6 393.2,252.3 394.0,250.0 395.0,247.5 396.3,244.9 397.8,242.3 399.2,239.8 400.7,237.3 402.1,235.2 403.2,233.4 404.0,232.0" fill="none" stroke="#cda253" stroke-width="0.5" opacity="0.8" />
<polyline points="383.3,296.7 383.2,294.1 383.1,290.7 382.9,286.6 382.7,282.1 382.6,277.4 382.5,272.8 382.5,268.6 382.7,265.0 383.0,261.9 383.3,259.2 383.8,256.6 384.3,254.2 385.0,252.0 385.7,249.8 386.5,247.6 387.3,245.3 388.4,243.0 389.7,240.6 391.1,238.1 392.6,235.8 394.1,233.6 395.4,231.6 396.5,229.9 397.3,228.7" fill="none" stroke="#cda253" stroke-width="0.5" opacity="0.8" />
<polyline points="374.7,293.3 374.7,290.7 374.7,287.0 374.7,282.7 374.7,277.9 374.7,272.9 374.8,268.1 375.0,263.7 375.3,260.0 375.7,256.9 376.2,254.1 376.8,251.5 377.4,249.2 378.1,247.0 378.9,244.9 379.7,242.8 380.7,240.7 381.8,238.5 383.1,236.2 384.5,233.9 386.0,231.8 387.4,229.8 388.8,228.0 389.9,226.5 390.7,225.3" fill="none" stroke="#cda253" stroke-width="0.5" opacity="0.8" />
<polyline points="366.0,290.0 366.1,287.2 366.3,283.3 366.4,278.7 366.6,273.7 366.9,268.5 367.2,263.4 367.5,258.8 368.0,255.0 368.5,251.8 369.1,249.0 369.8,246.5 370.5,244.2 371.3,242.1 372.1,240.0 373.0,238.0 374.0,236.0 375.1,233.9 376.5,231.8 377.9,229.8 379.4,227.8 380.8,226.0 382.1,224.4 383.2,223.0 384.0,222.0" fill="none" stroke="#cda253" stroke-width="0.5" opacity="0.8" />
<polyline points="438.0,225.0 440.6,225.2 444.1,225.7 448.3,226.2 453.0,226.7 457.7,227.1 462.3,227.3 466.5,227.2 470.0,226.7 472.8,225.7 475.3,224.3 477.5,222.7 479.5,220.8 481.4,218.8 483.1,216.7 484.9,214.8 486.7,213.0 488.5,211.3 490.3,209.6 491.9,207.9 493.6,206.3 495.2,204.6 496.8,203.0 498.4,201.5 500.0,200.0 501.6,198.6 503.2,197.3 504.9,196.1 506.5,194.9 508.1,193.8 509.7,192.6 511.3,191.3 513.0,190.0 514.8,188.5 516.8,186.9 518.8,185.1 520.8,183.4 522.7,181.7 524.5,180.2 525.9,178.9 527.0,178.0" fill="none" stroke="#cda253" stroke-width="0.8" opacity="0.95" />
<polyline points="438.0,223.2 440.5,223.4 444.0,223.8 448.1,224.2 452.6,224.7 457.3,225.1 461.8,225.2 465.8,225.1 469.2,224.5 472.0,223.5 474.4,222.1 476.5,220.5 478.4,218.6 480.1,216.6 481.8,214.6 483.5,212.6 485.3,210.8 487.0,209.1 488.7,207.4 490.4,205.6 492.0,203.9 493.6,202.2 495.2,200.6 496.8,199.0 498.4,197.5 500.1,196.1 501.7,194.7 503.3,193.5 505.0,192.3 506.6,191.1 508.3,189.9 510.0,188.7 511.8,187.3 513.7,185.9 515.8,184.2 518.0,182.5 520.2,180.8 522.3,179.1 524.2,177.6 525.8,176.4 527.0,175.5" fill="none" stroke="#cda253" stroke-width="0.8" opacity="0.95" />
<polyline points="438.0,221.3 440.5,221.5 443.8,221.9 447.8,222.3 452.3,222.7 456.8,223.0 461.2,223.1 465.1,222.9 468.4,222.3 471.1,221.3 473.4,219.9 475.4,218.3 477.2,216.4 478.9,214.4 480.5,212.4 482.1,210.4 483.8,208.6 485.5,206.9 487.2,205.1 488.8,203.3 490.4,201.5 492.0,199.8 493.6,198.1 495.2,196.5 496.8,194.9 498.5,193.5 500.1,192.2 501.8,190.9 503.5,189.7 505.2,188.5 506.9,187.3 508.7,186.0 510.6,184.7 512.6,183.2 514.9,181.6 517.3,179.9 519.7,178.2 521.9,176.5 524.0,175.1 525.7,173.8 527.0,172.9" fill="none" stroke="#cda253" stroke-width="0.8" opacity="0.95" />
<polyline points="438.0,219.5 440.4,219.6 443.7,220.0 447.6,220.3 451.9,220.7 456.3,220.9 460.6,221.0 464.5,220.8 467.7,220.2 470.2,219.1 472.4,217.7 474.3,216.1 476.1,214.2 477.6,212.2 479.2,210.2 480.7,208.2 482.4,206.4 484.0,204.6 485.7,202.8 487.3,201.0 488.8,199.2 490.4,197.4 491.9,195.7 493.5,194.0 495.2,192.4 496.9,190.9 498.6,189.6 500.3,188.3 502.0,187.1 503.8,185.8 505.6,184.6 507.5,183.3 509.4,182.0 511.6,180.5 514.0,178.9 516.5,177.2 519.1,175.6 521.5,174.0 523.8,172.5 525.6,171.3 527.0,170.4" fill="none" stroke="#cda253" stroke-width="0.8" opacity="0.95" />
<polyline points="438.0,217.7 440.3,217.8 443.5,218.1 447.4,218.4 451.6,218.7 455.9,218.9 460.0,218.9 463.8,218.6 466.9,218.0 469.4,216.9 471.5,215.5 473.3,213.9 474.9,212.0 476.4,210.0 477.8,208.0 479.3,206.0 480.9,204.2 482.6,202.4 484.1,200.6 485.7,198.7 487.2,196.8 488.8,195.0 490.3,193.2 491.9,191.5 493.6,189.9 495.3,188.4 497.0,187.0 498.8,185.7 500.5,184.4 502.3,183.2 504.2,181.9 506.2,180.7 508.2,179.3 510.5,177.9 513.0,176.3 515.8,174.6 518.5,172.9 521.1,171.4 523.5,169.9 525.5,168.8 527.0,167.9" fill="none" stroke="#cda253" stroke-width="0.8" opacity="0.95" />
<polyline points="438.0,215.8 440.3,215.9 443.4,216.2 447.1,216.4 451.2,216.7 455.4,216.8 459.5,216.8 463.1,216.5 466.1,215.8 468.5,214.7 470.5,213.3 472.2,211.7 473.8,209.8 475.2,207.8 476.5,205.8 477.9,203.9 479.5,202.0 481.1,200.2 482.6,198.3 484.1,196.4 485.6,194.5 487.2,192.6 488.7,190.7 490.3,189.0 492.0,187.3 493.7,185.8 495.5,184.4 497.2,183.1 499.0,181.8 500.9,180.5 502.8,179.3 504.9,178.0 507.0,176.7 509.4,175.2 512.1,173.6 515.0,172.0 517.9,170.3 520.7,168.8 523.3,167.4 525.4,166.2 527.0,165.3" fill="none" stroke="#cda253" stroke-width="0.8" opacity="0.95" />
<polyline points="438.0,214.0 440.2,214.1 443.3,214.2 446.9,214.5 450.9,214.7 454.9,214.8 458.9,214.7 462.4,214.3 465.3,213.6 467.6,212.5 469.5,211.1 471.2,209.5 472.6,207.6 473.9,205.7 475.2,203.7 476.5,201.7 478.0,199.8 479.6,198.0 481.1,196.0 482.6,194.1 484.0,192.1 485.6,190.2 487.1,188.3 488.7,186.5 490.4,184.8 492.1,183.3 493.9,181.8 495.7,180.5 497.5,179.2 499.5,177.9 501.5,176.6 503.6,175.3 505.8,174.0 508.3,172.5 511.2,171.0 514.3,169.3 517.4,167.7 520.3,166.2 523.1,164.8 525.3,163.7 527.0,162.8" fill="none" stroke="#cda253" stroke-width="0.8" opacity="0.95" />
<polyline points="438.0,212.2 440.1,212.2 443.1,212.3 446.6,212.5 450.5,212.7 454.5,212.7 458.3,212.6 461.7,212.2 464.5,211.4 466.7,210.3 468.6,208.9 470.1,207.3 471.5,205.4 472.7,203.5 473.9,201.5 475.2,199.5 476.6,197.6 478.1,195.7 479.5,193.8 481.0,191.8 482.5,189.8 483.9,187.8 485.5,185.8 487.1,184.0 488.8,182.3 490.6,180.7 492.3,179.2 494.2,177.9 496.1,176.5 498.0,175.2 500.1,174.0 502.3,172.7 504.6,171.3 507.2,169.9 510.3,168.3 513.5,166.7 516.8,165.1 520.0,163.6 522.8,162.3 525.2,161.1 527.0,160.3" fill="none" stroke="#cda253" stroke-width="0.8" opacity="0.95" />
<polyline points="438.0,210.3 440.1,210.3 443.0,210.4 446.4,210.6 450.2,210.7 454.0,210.6 457.7,210.5 461.1,210.0 463.8,209.3 465.9,208.2 467.6,206.7 469.0,205.1 470.3,203.2 471.4,201.3 472.6,199.3 473.8,197.3 475.1,195.4 476.6,193.5 478.0,191.5 479.4,189.5 480.9,187.4 482.3,185.4 483.9,183.4 485.5,181.5 487.2,179.7 489.0,178.1 490.8,176.6 492.6,175.2 494.6,173.9 496.6,172.6 498.7,171.3 501.0,170.0 503.4,168.7 506.2,167.2 509.3,165.7 512.7,164.1 516.2,162.5 519.6,161.0 522.6,159.7 525.1,158.6 527.0,157.7" fill="none" stroke="#cda253" stroke-width="0.8" opacity="0.95" />
<polyline points="438.0,208.5 440.0,208.5 442.8,208.5 446.2,208.6 449.8,208.7 453.6,208.6 457.2,208.3 460.4,207.9 463.0,207.1 465.0,206.0 466.6,204.5 468.0,202.9 469.1,201.1 470.2,199.1 471.3,197.1 472.4,195.1 473.7,193.2 475.1,191.3 476.5,189.2 477.9,187.1 479.3,185.0 480.7,182.9 482.3,180.9 483.9,179.0 485.6,177.2 487.4,175.6 489.2,174.1 491.1,172.6 493.1,171.3 495.2,170.0 497.4,168.7 499.7,167.3 502.2,166.0 505.1,164.6 508.4,163.0 512.0,161.4 515.6,159.9 519.2,158.4 522.4,157.1 525.0,156.0 527.0,155.2" fill="none" stroke="#cda253" stroke-width="0.8" opacity="0.95" />
<polyline points="438.0,206.7 440.0,206.6 442.7,206.6 445.9,206.7 449.5,206.7 453.1,206.5 456.6,206.2 459.7,205.7 462.2,204.9 464.1,203.8 465.7,202.3 466.9,200.7 468.0,198.9 469.0,196.9 469.9,194.9 471.0,192.9 472.2,191.0 473.6,189.0 474.9,187.0 476.3,184.8 477.7,182.7 479.1,180.5 480.6,178.5 482.3,176.5 484.0,174.7 485.8,173.0 487.7,171.5 489.6,170.0 491.6,168.6 493.7,167.3 496.0,166.0 498.4,164.7 501.0,163.3 504.0,161.9 507.5,160.4 511.2,158.8 515.1,157.3 518.8,155.9 522.1,154.6 524.9,153.5 527.0,152.7" fill="none" stroke="#cda253" stroke-width="0.8" opacity="0.95" />
<polyline points="438.0,204.8 439.9,204.8 442.5,204.7 445.7,204.7 449.1,204.6 452.6,204.5 456.0,204.1 459.0,203.6 461.4,202.7 463.2,201.6 464.7,200.1 465.9,198.5 466.8,196.7 467.7,194.7 468.6,192.7 469.6,190.8 470.8,188.8 472.1,186.8 473.4,184.7 474.7,182.5 476.1,180.3 477.5,178.1 479.0,176.0 480.7,174.0 482.4,172.1 484.2,170.4 486.1,168.9 488.1,167.4 490.1,166.0 492.3,164.7 494.6,163.3 497.1,162.0 499.8,160.7 502.9,159.2 506.5,157.7 510.5,156.2 514.5,154.7 518.4,153.3 521.9,152.0 524.8,150.9 527.0,150.1" fill="none" stroke="#cda253" stroke-width="0.8" opacity="0.95" />
<polyline points="438.0,203.0 439.8,202.9 442.4,202.8 445.4,202.8 448.8,202.6 452.2,202.4 455.4,202.0 458.3,201.4 460.6,200.5 462.4,199.4 463.7,197.9 464.8,196.3 465.7,194.5 466.5,192.6 467.3,190.6 468.2,188.6 469.3,186.6 470.6,184.6 471.9,182.4 473.2,180.2 474.5,178.0 475.9,175.7 477.4,173.5 479.0,171.5 480.8,169.6 482.6,167.9 484.6,166.3 486.5,164.8 488.6,163.4 490.9,162.0 493.3,160.7 495.8,159.4 498.6,158.0 501.8,156.6 505.6,155.1 509.7,153.6 513.9,152.1 518.0,150.7 521.6,149.4 524.7,148.4 527.0,147.6" fill="none" stroke="#cda253" stroke-width="0.8" opacity="0.95" />
<polyline points="438.0,201.2 439.8,201.0 442.3,200.9 445.2,200.8 448.4,200.6 451.7,200.4 454.9,199.9 457.6,199.3 459.9,198.4 461.5,197.2 462.8,195.7 463.7,194.1 464.5,192.3 465.2,190.4 466.0,188.4 466.8,186.4 467.9,184.4 469.1,182.4 470.3,180.2 471.6,177.9 472.9,175.6 474.3,173.3 475.8,171.1 477.4,169.0 479.2,167.1 481.1,165.3 483.0,163.7 485.0,162.2 487.2,160.8 489.4,159.4 491.9,158.0 494.5,156.7 497.4,155.3 500.8,153.9 504.7,152.4 509.0,150.9 513.3,149.5 517.6,148.1 521.4,146.9 524.6,145.8 527.0,145.1" fill="none" stroke="#cda253" stroke-width="0.8" opacity="0.95" />
<polyline points="438.0,199.3 439.7,199.2 442.1,199.0 445.0,198.9 448.1,198.6 451.3,198.3 454.3,197.8 457.0,197.1 459.1,196.2 460.6,195.0 461.8,193.5 462.7,191.9 463.4,190.1 464.0,188.2 464.7,186.2 465.4,184.2 466.4,182.2 467.6,180.1 468.8,177.9 470.0,175.6 471.3,173.2 472.7,170.9 474.2,168.6 475.8,166.5 477.6,164.5 479.5,162.8 481.4,161.1 483.5,159.6 485.7,158.1 488.0,156.7 490.5,155.4 493.2,154.0 496.2,152.7 499.7,151.2 503.8,149.8 508.2,148.3 512.8,146.9 517.2,145.5 521.2,144.3 524.5,143.3 527.0,142.5" fill="none" stroke="#cda253" stroke-width="0.8" opacity="0.95" />
<polyline points="438.0,197.5 439.7,197.3 442.0,197.1 444.7,196.9 447.7,196.6 450.8,196.2 453.7,195.7 456.3,195.0 458.3,194.0 459.8,192.8 460.8,191.3 461.6,189.7 462.2,187.9 462.8,186.0 463.3,184.0 464.0,182.0 465.0,180.0 466.1,177.9 467.3,175.6 468.5,173.3 469.7,170.9 471.1,168.5 472.6,166.2 474.2,164.0 476.0,162.0 477.9,160.2 479.9,158.5 482.0,157.0 484.2,155.5 486.6,154.1 489.1,152.7 491.9,151.4 495.0,150.0 498.6,148.6 502.8,147.1 507.5,145.7 512.2,144.2 516.8,142.9 520.9,141.8 524.4,140.8 527.0,140.0" fill="none" stroke="#cda253" stroke-width="0.8" opacity="0.95" />
<polyline points="527.0,178.0 528.2,177.9 529.9,177.8 531.8,177.6 533.9,177.4 536.2,177.3 538.6,177.1 540.8,177.0 543.0,177.0 545.1,177.0 547.1,177.0 549.2,177.1 551.2,177.1 553.4,177.2 555.5,177.4 557.7,177.7 560.0,178.0 562.4,178.4 565.0,178.9 567.6,179.4 570.2,179.9 572.9,180.6 575.4,181.3 577.8,182.1 580.0,183.0 582.0,184.0 584.0,185.2 585.8,186.4 587.5,187.8 589.1,189.1 590.5,190.5 591.9,191.8 593.0,193.0 594.0,194.0 594.7,194.8 595.3,195.5 595.8,196.2 596.1,197.1 596.4,198.3 596.7,199.9 597.0,202.0 597.3,205.0 597.5,208.7 597.6,213.0 597.8,217.6 597.8,222.0 597.9,226.1 597.9,229.5 598.0,232.0" fill="none" stroke="#cda253" stroke-width="0.8" opacity="0.95" />
<polyline points="527.0,175.5 528.2,175.3 529.9,175.1 531.8,174.9 533.9,174.6 536.2,174.4 538.6,174.2 540.8,174.0 543.0,173.9 545.1,173.9 547.1,173.9 549.2,173.9 551.2,174.0 553.3,174.1 555.5,174.3 557.7,174.5 560.0,174.9 562.4,175.3 565.0,175.8 567.7,176.3 570.4,176.9 573.1,177.6 575.7,178.4 578.2,179.2 580.4,180.2 582.5,181.3 584.5,182.5 586.4,183.8 588.2,185.2 589.8,186.7 591.3,188.1 592.7,189.5 593.9,190.9 595.0,192.0 595.8,192.9 596.5,193.7 597.0,194.5 597.4,195.5 597.8,196.8 598.2,198.5 598.5,200.7 598.9,203.8 599.1,207.8 599.3,212.3 599.4,217.1 599.5,221.8 599.6,226.0 599.7,229.6 599.7,232.2" fill="none" stroke="#cda253" stroke-width="0.8" opacity="0.95" />
<polyline points="527.0,172.9 528.2,172.8 529.9,172.5 531.8,172.2 533.9,171.8 536.2,171.5 538.6,171.2 540.8,171.0 543.0,170.9 545.1,170.8 547.1,170.8 549.1,170.8 551.2,170.8 553.3,170.9 555.5,171.1 557.7,171.4 560.0,171.7 562.5,172.2 565.1,172.7 567.8,173.3 570.6,173.9 573.3,174.6 576.0,175.5 578.5,176.4 580.8,177.4 582.9,178.5 585.0,179.8 587.0,181.3 588.8,182.8 590.5,184.3 592.1,185.8 593.6,187.3 594.9,188.7 596.0,190.0 596.9,190.9 597.6,191.8 598.3,192.8 598.8,193.8 599.2,195.2 599.7,197.1 600.1,199.5 600.4,202.7 600.7,206.9 600.9,211.6 601.1,216.6 601.2,221.5 601.3,226.0 601.4,229.7 601.5,232.4" fill="none" stroke="#cda253" stroke-width="0.8" opacity="0.95" />
<polyline points="527.0,170.4 528.2,170.2 529.9,169.9 531.8,169.5 533.9,169.1 536.2,168.6 538.6,168.3 540.8,168.0 543.0,167.8 545.0,167.7 547.1,167.6 549.1,167.6 551.2,167.7 553.3,167.8 555.4,168.0 557.7,168.2 560.0,168.6 562.5,169.1 565.2,169.6 567.9,170.2 570.8,170.9 573.5,171.7 576.3,172.6 578.8,173.5 581.2,174.6 583.4,175.8 585.5,177.2 587.5,178.7 589.5,180.2 591.3,181.9 592.9,183.5 594.4,185.1 595.8,186.6 597.0,187.9 598.0,189.0 598.8,190.0 599.5,191.0 600.1,192.2 600.7,193.7 601.1,195.7 601.6,198.2 602.0,201.6 602.3,206.0 602.6,210.9 602.8,216.1 602.9,221.2 603.0,225.9 603.1,229.8 603.2,232.6" fill="none" stroke="#cda253" stroke-width="0.8" opacity="0.95" />
<polyline points="527.0,167.9 528.2,167.6 529.9,167.2 531.8,166.8 533.9,166.3 536.2,165.8 538.6,165.3 540.8,165.0 543.0,164.7 545.0,164.6 547.1,164.5 549.1,164.5 551.1,164.5 553.2,164.6 555.4,164.8 557.6,165.1 560.0,165.5 562.5,165.9 565.2,166.5 568.0,167.2 570.9,167.9 573.8,168.7 576.5,169.6 579.2,170.7 581.6,171.8 583.9,173.1 586.0,174.5 588.1,176.1 590.1,177.8 592.0,179.5 593.7,181.2 595.3,182.8 596.7,184.5 598.0,185.9 599.1,187.0 600.0,188.1 600.8,189.2 601.5,190.6 602.1,192.2 602.6,194.3 603.1,196.9 603.6,200.5 603.9,205.1 604.2,210.2 604.4,215.6 604.6,220.9 604.7,225.8 604.8,229.9 604.9,232.8" fill="none" stroke="#cda253" stroke-width="0.8" opacity="0.95" />
<polyline points="527.0,165.3 528.2,165.0 529.9,164.6 531.8,164.0 533.9,163.5 536.2,162.9 538.6,162.4 540.8,161.9 543.0,161.7 545.0,161.5 547.1,161.4 549.1,161.3 551.1,161.4 553.2,161.5 555.4,161.6 557.6,161.9 560.0,162.3 562.6,162.8 565.3,163.4 568.2,164.1 571.1,164.9 574.0,165.7 576.8,166.7 579.5,167.8 582.0,169.0 584.3,170.3 586.6,171.9 588.7,173.5 590.8,175.3 592.7,177.0 594.5,178.8 596.2,180.6 597.7,182.3 599.0,183.8 600.1,185.1 601.1,186.3 602.0,187.5 602.8,188.9 603.5,190.6 604.1,192.9 604.7,195.7 605.2,199.4 605.6,204.2 605.9,209.5 606.1,215.2 606.3,220.7 606.4,225.7 606.5,230.0 606.7,233.0" fill="none" stroke="#cda253" stroke-width="0.8" opacity="0.95" />
<polyline points="527.0,162.8 528.2,162.4 529.9,161.9 531.8,161.3 533.9,160.7 536.2,160.0 538.6,159.4 540.8,158.9 543.0,158.6 545.0,158.4 547.1,158.3 549.1,158.2 551.1,158.2 553.2,158.3 555.3,158.5 557.6,158.8 560.0,159.2 562.6,159.7 565.4,160.3 568.3,161.0 571.2,161.9 574.2,162.8 577.1,163.8 579.9,164.9 582.4,166.2 584.8,167.6 587.1,169.2 589.3,170.9 591.4,172.8 593.4,174.6 595.3,176.5 597.0,178.4 598.6,180.2 600.0,181.8 601.2,183.2 602.3,184.4 603.3,185.8 604.1,187.3 604.9,189.1 605.6,191.4 606.2,194.4 606.7,198.3 607.2,203.3 607.5,208.9 607.8,214.7 608.0,220.4 608.1,225.7 608.3,230.0 608.4,233.2" fill="none" stroke="#cda253" stroke-width="0.8" opacity="0.95" />
<polyline points="527.0,160.3 528.2,159.9 529.9,159.3 531.8,158.6 533.9,157.9 536.2,157.1 538.6,156.5 540.8,155.9 543.0,155.5 545.0,155.3 547.0,155.1 549.0,155.0 551.1,155.0 553.2,155.1 555.3,155.3 557.6,155.6 560.0,156.1 562.6,156.6 565.4,157.2 568.4,158.0 571.4,158.8 574.4,159.8 577.4,160.9 580.2,162.1 582.8,163.4 585.2,164.9 587.6,166.5 589.9,168.3 592.1,170.2 594.1,172.2 596.1,174.2 597.9,176.2 599.5,178.1 601.0,179.8 602.3,181.2 603.5,182.6 604.5,184.0 605.5,185.6 606.3,187.6 607.0,190.0 607.7,193.1 608.3,197.2 608.8,202.4 609.2,208.2 609.4,214.2 609.7,220.1 609.8,225.6 610.0,230.1 610.1,233.4" fill="none" stroke="#cda253" stroke-width="0.8" opacity="0.95" />
<polyline points="527.0,157.7 528.2,157.3 529.9,156.7 531.8,155.9 533.9,155.1 536.2,154.3 538.6,153.5 540.8,152.9 543.0,152.5 545.0,152.2 547.0,152.0 549.0,151.9 551.1,151.9 553.1,152.0 555.3,152.2 557.6,152.5 560.0,152.9 562.6,153.5 565.5,154.2 568.5,154.9 571.6,155.8 574.7,156.8 577.7,158.0 580.5,159.2 583.2,160.6 585.7,162.1 588.1,163.9 590.5,165.8 592.7,167.8 594.9,169.8 596.9,171.9 598.8,173.9 600.5,175.9 602.0,177.7 603.4,179.3 604.7,180.7 605.8,182.2 606.8,184.0 607.7,186.1 608.5,188.6 609.3,191.9 609.9,196.1 610.4,201.5 610.8,207.5 611.1,213.7 611.4,219.9 611.5,225.5 611.7,230.2 611.9,233.6" fill="none" stroke="#cda253" stroke-width="0.8" opacity="0.95" />
<polyline points="527.0,155.2 528.2,154.7 529.9,154.0 531.8,153.2 533.9,152.3 536.2,151.4 538.6,150.6 540.8,149.9 543.0,149.4 545.0,149.1 547.0,148.9 549.0,148.8 551.0,148.7 553.1,148.8 555.3,149.0 557.6,149.3 560.0,149.8 562.7,150.4 565.6,151.1 568.6,151.9 571.8,152.8 574.9,153.9 578.0,155.1 580.9,156.4 583.6,157.8 586.2,159.4 588.7,161.2 591.1,163.2 593.4,165.2 595.6,167.4 597.7,169.6 599.6,171.7 601.4,173.8 603.0,175.7 604.5,177.3 605.8,178.9 607.0,180.5 608.1,182.3 609.1,184.5 610.0,187.2 610.8,190.6 611.5,195.0 612.0,200.6 612.5,206.8 612.8,213.2 613.0,219.6 613.3,225.4 613.4,230.3 613.6,233.8" fill="none" stroke="#cda253" stroke-width="0.8" opacity="0.95" />
<polyline points="527.0,152.7 528.2,152.1 529.9,151.4 531.8,150.5 533.9,149.5 536.2,148.5 538.6,147.6 540.8,146.8 543.0,146.3 545.0,146.0 547.0,145.8 549.0,145.6 551.0,145.6 553.1,145.7 555.2,145.9 557.5,146.2 560.0,146.7 562.7,147.3 565.6,148.0 568.7,148.8 571.9,149.8 575.1,150.9 578.2,152.1 581.2,153.5 584.0,155.0 586.6,156.7 589.2,158.6 591.7,160.6 594.0,162.7 596.3,165.0 598.5,167.2 600.5,169.5 602.3,171.7 604.0,173.6 605.6,175.4 607.0,177.0 608.3,178.8 609.5,180.7 610.5,183.0 611.5,185.8 612.3,189.3 613.1,193.9 613.6,199.6 614.1,206.1 614.5,212.8 614.7,219.3 615.0,225.3 615.1,230.4 615.3,234.0" fill="none" stroke="#cda253" stroke-width="0.8" opacity="0.95" />
<polyline points="527.0,150.1 528.2,149.6 529.9,148.7 531.8,147.7 533.9,146.7 536.2,145.6 538.6,144.6 540.8,143.8 543.0,143.3 545.0,142.9 547.0,142.6 549.0,142.5 551.0,142.4 553.0,142.5 555.2,142.7 557.5,143.0 560.0,143.5 562.7,144.2 565.7,144.9 568.9,145.8 572.1,146.8 575.3,147.9 578.5,149.2 581.6,150.6 584.4,152.2 587.1,153.9 589.7,155.9 592.2,158.0 594.7,160.2 597.0,162.6 599.3,164.9 601.3,167.2 603.3,169.5 605.0,171.6 606.7,173.4 608.2,175.2 609.5,177.0 610.8,179.0 611.9,181.5 613.0,184.4 613.9,188.1 614.6,192.8 615.3,198.7 615.7,205.4 616.1,212.3 616.4,219.1 616.7,225.3 616.9,230.5 617.1,234.2" fill="none" stroke="#cda253" stroke-width="0.8" opacity="0.95" />
<polyline points="527.0,147.6 528.2,147.0 529.9,146.1 531.8,145.0 533.9,143.9 536.2,142.7 538.6,141.7 540.8,140.8 543.0,140.2 545.0,139.8 547.0,139.5 549.0,139.3 550.9,139.3 553.0,139.3 555.2,139.6 557.5,139.9 560.0,140.4 562.8,141.0 565.8,141.8 569.0,142.7 572.2,143.8 575.6,145.0 578.8,146.3 581.9,147.8 584.8,149.4 587.5,151.2 590.2,153.2 592.8,155.4 595.3,157.8 597.8,160.2 600.1,162.6 602.2,165.0 604.2,167.4 606.0,169.6 607.8,171.5 609.3,173.3 610.8,175.2 612.1,177.4 613.3,179.9 614.4,183.0 615.4,186.8 616.2,191.7 616.9,197.8 617.4,204.7 617.8,211.8 618.1,218.8 618.4,225.2 618.6,230.5 618.8,234.4" fill="none" stroke="#cda253" stroke-width="0.8" opacity="0.95" />
<polyline points="527.0,145.1 528.2,144.4 529.9,143.5 531.8,142.3 533.9,141.1 536.2,139.9 538.6,138.7 540.8,137.8 543.0,137.1 545.0,136.7 547.0,136.4 548.9,136.2 550.9,136.1 553.0,136.2 555.1,136.4 557.5,136.8 560.0,137.3 562.8,137.9 565.8,138.7 569.1,139.7 572.4,140.8 575.8,142.0 579.1,143.4 582.2,144.9 585.2,146.6 588.0,148.5 590.7,150.6 593.4,152.8 596.0,155.2 598.5,157.7 600.8,160.3 603.1,162.8 605.1,165.3 607.1,167.5 608.8,169.5 610.5,171.5 612.1,173.5 613.5,175.8 614.8,178.4 615.9,181.6 616.9,185.5 617.8,190.6 618.5,196.9 619.0,204.0 619.5,211.3 619.8,218.5 620.1,225.1 620.3,230.6 620.5,234.6" fill="none" stroke="#cda253" stroke-width="0.8" opacity="0.95" />
<polyline points="527.0,142.5 528.2,141.8 529.9,140.8 531.8,139.6 533.9,138.3 536.2,137.0 538.6,135.8 540.8,134.8 543.0,134.1 545.0,133.6 547.0,133.3 548.9,133.0 550.9,133.0 553.0,133.0 555.1,133.2 557.5,133.6 560.0,134.1 562.8,134.8 565.9,135.6 569.2,136.6 572.6,137.8 576.0,139.0 579.4,140.5 582.6,142.1 585.6,143.8 588.5,145.7 591.3,147.9 594.0,150.3 596.7,152.8 599.2,155.3 601.6,157.9 603.9,160.6 606.1,163.1 608.1,165.5 609.9,167.6 611.7,169.6 613.3,171.8 614.8,174.1 616.2,176.9 617.4,180.2 618.5,184.3 619.4,189.5 620.1,196.0 620.7,203.3 621.1,210.9 621.5,218.3 621.8,225.0 622.0,230.7 622.3,234.8" fill="none" stroke="#cda253" stroke-width="0.8" opacity="0.95" />
<polyline points="527.0,140.0 528.2,139.2 529.9,138.2 531.8,136.9 533.9,135.5 536.2,134.1 538.6,132.8 540.8,131.8 543.0,131.0 545.0,130.5 547.0,130.1 548.9,129.9 550.9,129.8 552.9,129.9 555.1,130.1 557.4,130.5 560.0,131.0 562.9,131.7 566.0,132.6 569.3,133.6 572.8,134.8 576.2,136.1 579.6,137.6 582.9,139.2 586.0,141.0 588.9,143.0 591.8,145.2 594.6,147.7 597.3,150.2 599.9,152.9 602.4,155.6 604.8,158.3 607.0,161.0 609.1,163.4 611.0,165.7 612.9,167.8 614.6,170.0 616.1,172.5 617.6,175.3 618.9,178.8 620.0,183.0 621.0,188.4 621.7,195.1 622.3,202.6 622.8,210.4 623.2,218.0 623.5,225.0 623.8,230.8 624.0,235.0" fill="none" stroke="#cda253" stroke-width="0.8" opacity="0.95" />
<polyline points="616.0,204.0 618.0,206.5 620.7,209.8 623.9,213.7 627.4,218.1 631.1,222.8 634.8,227.5 638.3,232.3 641.5,236.8 644.5,241.5 647.7,246.6 650.8,251.9 653.9,257.2 656.7,262.3 659.3,266.9 661.4,270.7 663.0,273.6" fill="none" stroke="#cda253" stroke-width="0.7" opacity="0.9" />
<polyline points="621.5,206.2 623.4,208.7 625.9,211.9 628.9,215.8 632.2,220.1 635.7,224.8 639.1,229.5 642.4,234.2 645.4,238.6 648.2,243.3 651.1,248.3 654.0,253.6 656.8,258.9 659.4,263.9 661.8,268.4 663.7,272.2 665.2,275.1" fill="none" stroke="#cda253" stroke-width="0.7" opacity="0.9" />
<polyline points="627.0,208.4 628.7,210.8 631.1,214.1 633.9,217.9 637.0,222.2 640.2,226.7 643.5,231.4 646.5,236.0 649.3,240.4 651.9,245.0 654.6,250.0 657.2,255.2 659.8,260.4 662.2,265.4 664.4,269.9 666.2,273.6 667.6,276.4" fill="none" stroke="#cda253" stroke-width="0.7" opacity="0.9" />
<polyline points="632.5,210.6 634.1,213.0 636.3,216.2 638.9,219.9 641.8,224.1 644.8,228.6 647.8,233.2 650.7,237.8 653.2,242.1 655.6,246.6 658.1,251.5 660.5,256.7 662.9,261.8 665.1,266.7 667.1,271.2 668.7,274.9 670.0,277.6" fill="none" stroke="#cda253" stroke-width="0.7" opacity="0.9" />
<polyline points="638.0,212.8 639.5,215.2 641.6,218.3 644.0,222.0 646.7,226.1 649.5,230.5 652.3,235.0 654.9,239.5 657.3,243.8 659.5,248.2 661.7,253.0 663.9,258.1 666.1,263.2 668.1,268.0 669.9,272.3 671.4,276.0 672.5,278.7" fill="none" stroke="#cda253" stroke-width="0.7" opacity="0.9" />
<polyline points="643.5,215.0 644.9,217.3 646.8,220.4 649.1,224.0 651.6,228.0 654.2,232.3 656.7,236.8 659.2,241.1 661.3,245.3 663.4,249.7 665.4,254.4 667.4,259.4 669.4,264.4 671.2,269.1 672.8,273.4 674.1,277.0 675.2,279.7" fill="none" stroke="#cda253" stroke-width="0.7" opacity="0.9" />
<polyline points="649.0,217.2 650.3,219.5 652.1,222.4 654.1,226.0 656.5,229.9 658.9,234.1 661.3,238.5 663.5,242.7 665.5,246.8 667.3,251.1 669.2,255.8 671.0,260.6 672.7,265.5 674.4,270.2 675.8,274.4 677.0,277.9 678.0,280.5" fill="none" stroke="#cda253" stroke-width="0.7" opacity="0.9" />
<polyline points="654.5,219.4 655.7,221.6 657.3,224.5 659.3,227.9 661.4,231.8 663.6,235.9 665.8,240.1 667.9,244.3 669.7,248.3 671.3,252.5 673.0,257.0 674.6,261.8 676.2,266.6 677.6,271.1 678.9,275.2 680.0,278.7 680.8,281.2" fill="none" stroke="#cda253" stroke-width="0.7" opacity="0.9" />
<polyline points="660.0,221.6 661.1,223.7 662.6,226.6 664.4,229.9 666.3,233.7 668.4,237.6 670.4,241.8 672.3,245.8 673.9,249.7 675.4,253.8 676.9,258.2 678.4,262.9 679.8,267.5 681.0,272.0 682.2,276.0 683.1,279.3 683.8,281.9" fill="none" stroke="#cda253" stroke-width="0.7" opacity="0.9" />
<polyline points="665.5,223.8 666.5,225.9 667.9,228.6 669.5,231.9 671.3,235.5 673.2,239.4 675.0,243.4 676.7,247.3 678.2,251.1 679.6,255.0 680.9,259.4 682.2,263.9 683.4,268.4 684.5,272.8 685.5,276.7 686.3,279.9 687.0,282.4" fill="none" stroke="#cda253" stroke-width="0.7" opacity="0.9" />
<polyline points="671.0,226.0 671.9,228.0 673.2,230.7 674.7,233.8 676.3,237.3 678.0,241.1 679.7,244.9 681.3,248.7 682.6,252.4 683.8,256.2 685.0,260.5 686.1,264.9 687.1,269.3 688.1,273.5 688.9,277.3 689.6,280.5 690.2,282.8" fill="none" stroke="#cda253" stroke-width="0.7" opacity="0.9" />
<polyline points="676.5,228.2 677.3,230.1 678.5,232.7 679.9,235.7 681.4,239.1 682.9,242.7 684.4,246.5 685.8,250.2 687.0,253.7 688.1,257.4 689.1,261.5 690.1,265.8 690.9,270.1 691.8,274.1 692.5,277.8 693.1,280.9 693.5,283.2" fill="none" stroke="#cda253" stroke-width="0.7" opacity="0.9" />
<polyline points="682.0,230.4 682.8,232.3 683.8,234.7 685.0,237.6 686.4,240.9 687.8,244.4 689.2,248.0 690.4,251.5 691.5,255.0 692.4,258.5 693.3,262.5 694.1,266.6 694.9,270.8 695.5,274.7 696.1,278.3 696.6,281.3 697.0,283.5" fill="none" stroke="#cda253" stroke-width="0.7" opacity="0.9" />
<polyline points="687.5,232.6 688.2,234.4 689.1,236.7 690.3,239.5 691.5,242.7 692.8,246.0 694.0,249.4 695.1,252.9 696.0,256.2 696.8,259.6 697.6,263.4 698.2,267.4 698.9,271.4 699.4,275.3 699.9,278.7 700.3,281.6 700.6,283.8" fill="none" stroke="#cda253" stroke-width="0.7" opacity="0.9" />
<polyline points="693.0,234.8 693.6,236.5 694.5,238.8 695.5,241.4 696.6,244.4 697.7,247.6 698.8,250.9 699.8,254.2 700.6,257.4 701.3,260.7 701.9,264.3 702.5,268.2 702.9,272.0 703.4,275.7 703.7,279.1 704.0,281.8 704.3,283.9" fill="none" stroke="#cda253" stroke-width="0.7" opacity="0.9" />
<polyline points="698.5,237.0 699.1,238.6 699.8,240.8 700.7,243.3 701.7,246.2 702.7,249.2 703.7,252.4 704.6,255.5 705.3,258.5 705.9,261.7 706.3,265.2 706.8,268.9 707.1,272.6 707.4,276.2 707.7,279.4 707.9,282.0 708.1,284.0" fill="none" stroke="#cda253" stroke-width="0.7" opacity="0.9" />
</g>
<g id="planes">
<polyline points="463.0,260.0 463.0,163.0 539.0,112.0 539.0,180.0" fill="none" stroke="#857a88" stroke-width="0.5" opacity="1" />
<polyline points="524.0,126.0 553.0,111.0 553.0,170.0" fill="none" stroke="#857a88" stroke-width="0.5" opacity="1" />
<polyline points="566.0,120.0 566.0,200.0" fill="none" stroke="#857a88" stroke-width="0.4" opacity="1" />
<polyline points="566.0,120.0 584.0,131.0 584.0,200.0" fill="none" stroke="#857a88" stroke-width="0.4" opacity="1" />
<polyline points="584.0,131.0 647.0,176.0 647.0,230.0" fill="none" stroke="#857a88" stroke-width="0.5" opacity="1" />
<polyline points="632.0,167.0 705.5,234.0 705.5,280.0" fill="none" stroke="#857a88" stroke-width="0.5" opacity="1" />
<polyline points="647.0,179.0 647.0,237.0" fill="none" stroke="#857a88" stroke-width="0.35" opacity="0.8" />
<polyline points="659.0,190.0 659.0,248.0" fill="none" stroke="#857a88" stroke-width="0.35" opacity="0.8" />
<polyline points="671.0,201.0 671.0,259.0" fill="none" stroke="#857a88" stroke-width="0.35" opacity="0.8" />
<polyline points="682.0,212.0 682.0,270.0" fill="none" stroke="#857a88" stroke-width="0.35" opacity="0.8" />
<polyline points="377.0,263.0 377.0,228.0 434.0,187.0 434.0,250.0" fill="none" stroke="#857a88" stroke-width="0.5" opacity="1" />
<polyline points="360.0,292.0 360.0,240.0 377.0,262.0" fill="none" stroke="#857a88" stroke-width="0.4" opacity="1" />
<polyline points="360.0,240.0 380.0,268.0" fill="none" stroke="#857a88" stroke-width="0.4" opacity="1" />
<polyline points="382.0,160.0 545.0,188.0" fill="none" stroke="#a05060" stroke-width="0.6" opacity="1" />
<polyline points="412.0,144.0 437.0,200.0" fill="none" stroke="#a05060" stroke-width="0.6" opacity="1" />
<polyline points="384.0,160.0 385.8,133.4" fill="none" stroke="#b0a0a0" stroke-width="0.4" opacity="1" />
<polyline points="412.0,144.0 399.5,126.0" fill="none" stroke="#b0a0a0" stroke-width="0.4" opacity="1" />
<polyline points="693.0,215.5 732.0,199.5" fill="none" stroke="#a05060" stroke-width="0.6" opacity="1" />
<polyline points="693.0,220.0 727.0,226.7" fill="none" stroke="#a05060" stroke-width="0.6" opacity="1" />
<polyline points="732.0,199.5 742.0,188.0" fill="none" stroke="#b0a0a0" stroke-width="0.4" opacity="1" />
<polyline points="727.0,226.7 729.5,207.0" fill="none" stroke="#b0a0a0" stroke-width="0.4" opacity="1" />
<polyline points="640.0,248.0 690.0,236.0" fill="none" stroke="#a05060" stroke-width="0.5" opacity="1" />
<polyline points="388.0,269.0 423.0,269.0" fill="none" stroke="#8a5a4a" stroke-width="0.5" opacity="1" />
</g>
<g id="stacks">
<rect x="362.0" y="257.0" width="3.6" height="35" fill="#e8e8e8" stroke="#333" stroke-width="0.500"/>
<rect x="362.5" y="257.6" width="2.6" height="1.800" fill="#555"/>
<rect x="366.1" y="258.2" width="4.2" height="1" fill="#e0402a" opacity="0.85"/>
<rect x="362.5" y="261.2" width="2.6" height="1.800" fill="#555"/>
<rect x="366.1" y="261.8" width="4.2" height="1" fill="#e0402a" opacity="0.85"/>
<rect x="362.5" y="264.8" width="2.6" height="1.800" fill="#555"/>
<rect x="366.1" y="265.4" width="4.2" height="1" fill="#e0402a" opacity="0.85"/>
<rect x="362.5" y="268.4" width="2.6" height="1.800" fill="#555"/>
<rect x="366.1" y="269.0" width="4.2" height="1" fill="#e0402a" opacity="0.85"/>
<rect x="362.5" y="272.0" width="2.6" height="1.800" fill="#555"/>
<rect x="366.1" y="272.6" width="4.2" height="1" fill="#e0402a" opacity="0.85"/>
<rect x="362.5" y="275.6" width="2.6" height="1.800" fill="#555"/>
<rect x="366.1" y="276.2" width="4.2" height="1" fill="#e0402a" opacity="0.85"/>
<rect x="362.5" y="279.2" width="2.6" height="1.800" fill="#555"/>
<rect x="366.1" y="279.8" width="4.2" height="1" fill="#e0402a" opacity="0.85"/>
<rect x="362.5" y="282.8" width="2.6" height="1.800" fill="#555"/>
<rect x="366.1" y="283.4" width="4.2" height="1" fill="#e0402a" opacity="0.85"/>
<rect x="362.5" y="286.4" width="2.6" height="1.800" fill="#555"/>
<rect x="366.1" y="287.0" width="4.2" height="1" fill="#e0402a" opacity="0.85"/>
<polyline points="365.6,292.0 359.5,295.5" fill="none" stroke="#7fd020" stroke-width="1.0" opacity="1" />
<polyline points="365.6,291.5 363.0,293.5" fill="none" stroke="#e8e020" stroke-width="0.8" opacity="1" />
<rect x="374.0" y="266.5" width="3.6" height="36" fill="#e8e8e8" stroke="#333" stroke-width="0.500"/>
<rect x="374.5" y="267.1" width="2.6" height="1.800" fill="#555"/>
<rect x="378.1" y="267.7" width="4.2" height="1" fill="#e0402a" opacity="0.85"/>
<rect x="374.5" y="270.7" width="2.6" height="1.800" fill="#555"/>
<rect x="378.1" y="271.3" width="4.2" height="1" fill="#e0402a" opacity="0.85"/>
<rect x="374.5" y="274.3" width="2.6" height="1.800" fill="#555"/>
<rect x="378.1" y="274.9" width="4.2" height="1" fill="#e0402a" opacity="0.85"/>
<rect x="374.5" y="277.9" width="2.6" height="1.800" fill="#555"/>
<rect x="378.1" y="278.5" width="4.2" height="1" fill="#e0402a" opacity="0.85"/>
<rect x="374.5" y="281.5" width="2.6" height="1.800" fill="#555"/>
<rect x="378.1" y="282.1" width="4.2" height="1" fill="#e0402a" opacity="0.85"/>
<rect x="374.5" y="285.1" width="2.6" height="1.800" fill="#555"/>
<rect x="378.1" y="285.7" width="4.2" height="1" fill="#e0402a" opacity="0.85"/>
<rect x="374.5" y="288.7" width="2.6" height="1.800" fill="#555"/>
<rect x="378.1" y="289.3" width="4.2" height="1" fill="#e0402a" opacity="0.85"/>
<rect x="374.5" y="292.3" width="2.6" height="1.800" fill="#555"/>
<rect x="378.1" y="292.9" width="4.2" height="1" fill="#e0402a" opacity="0.85"/>
<rect x="374.5" y="295.9" width="2.6" height="1.800" fill="#555"/>
<rect x="378.1" y="296.5" width="4.2" height="1" fill="#e0402a" opacity="0.85"/>
<rect x="374.5" y="299.5" width="2.6" height="1.800" fill="#555"/>
<rect x="378.1" y="300.1" width="4.2" height="1" fill="#e0402a" opacity="0.85"/>
<polyline points="377.6,302.5 371.5,306.0" fill="none" stroke="#7fd020" stroke-width="1.0" opacity="1" />
<polyline points="377.6,302.0 375.0,304.0" fill="none" stroke="#e8e020" stroke-width="0.8" opacity="1" />
<rect x="390.5" y="278.0" width="3.6" height="38" fill="#e8e8e8" stroke="#333" stroke-width="0.500"/>
<rect x="391.0" y="278.6" width="2.6" height="1.800" fill="#555"/>
<rect x="394.6" y="279.2" width="4.2" height="1" fill="#e0402a" opacity="0.85"/>
<rect x="391.0" y="282.2" width="2.6" height="1.800" fill="#555"/>
<rect x="394.6" y="282.8" width="4.2" height="1" fill="#e0402a" opacity="0.85"/>
<rect x="391.0" y="285.8" width="2.6" height="1.800" fill="#555"/>
<rect x="394.6" y="286.4" width="4.2" height="1" fill="#e0402a" opacity="0.85"/>
<rect x="391.0" y="289.4" width="2.6" height="1.800" fill="#555"/>
<rect x="394.6" y="290.0" width="4.2" height="1" fill="#e0402a" opacity="0.85"/>
<rect x="391.0" y="293.0" width="2.6" height="1.800" fill="#555"/>
<rect x="394.6" y="293.6" width="4.2" height="1" fill="#e0402a" opacity="0.85"/>
<rect x="391.0" y="296.6" width="2.6" height="1.800" fill="#555"/>
<rect x="394.6" y="297.2" width="4.2" height="1" fill="#e0402a" opacity="0.85"/>
<rect x="391.0" y="300.2" width="2.6" height="1.800" fill="#555"/>
<rect x="394.6" y="300.8" width="4.2" height="1" fill="#e0402a" opacity="0.85"/>
<rect x="391.0" y="303.8" width="2.6" height="1.800" fill="#555"/>
<rect x="394.6" y="304.4" width="4.2" height="1" fill="#e0402a" opacity="0.85"/>
<rect x="391.0" y="307.4" width="2.6" height="1.800" fill="#555"/>
<rect x="394.6" y="308.0" width="4.2" height="1" fill="#e0402a" opacity="0.85"/>
<rect x="391.0" y="311.0" width="2.6" height="1.800" fill="#555"/>
<rect x="394.6" y="311.6" width="4.2" height="1" fill="#e0402a" opacity="0.85"/>
<polyline points="394.1,316.0 388.0,319.5" fill="none" stroke="#7fd020" stroke-width="1.0" opacity="1" />
<polyline points="394.1,315.5 391.5,317.5" fill="none" stroke="#e8e020" stroke-width="0.8" opacity="1" />
<rect x="435.5" y="196.0" width="3.6" height="42" fill="#e8e8e8" stroke="#333" stroke-width="0.500"/>
<rect x="436.0" y="196.6" width="2.6" height="1.800" fill="#555"/>
<rect x="439.6" y="197.2" width="4.2" height="1" fill="#e0402a" opacity="0.85"/>
<rect x="436.0" y="200.2" width="2.6" height="1.800" fill="#555"/>
<rect x="439.6" y="200.8" width="4.2" height="1" fill="#e0402a" opacity="0.85"/>
<rect x="436.0" y="203.8" width="2.6" height="1.800" fill="#555"/>
<rect x="439.6" y="204.4" width="4.2" height="1" fill="#e0402a" opacity="0.85"/>
<rect x="436.0" y="207.4" width="2.6" height="1.800" fill="#555"/>
<rect x="439.6" y="208.0" width="4.2" height="1" fill="#e0402a" opacity="0.85"/>
<rect x="436.0" y="211.0" width="2.6" height="1.800" fill="#555"/>
<rect x="439.6" y="211.6" width="4.2" height="1" fill="#e0402a" opacity="0.85"/>
<rect x="436.0" y="214.6" width="2.6" height="1.800" fill="#555"/>
<rect x="439.6" y="215.2" width="4.2" height="1" fill="#e0402a" opacity="0.85"/>
<rect x="436.0" y="218.2" width="2.6" height="1.800" fill="#555"/>
<rect x="439.6" y="218.8" width="4.2" height="1" fill="#e0402a" opacity="0.85"/>
<rect x="436.0" y="221.8" width="2.6" height="1.800" fill="#555"/>
<rect x="439.6" y="222.4" width="4.2" height="1" fill="#e0402a" opacity="0.85"/>
<rect x="436.0" y="225.4" width="2.6" height="1.800" fill="#555"/>
<rect x="439.6" y="226.0" width="4.2" height="1" fill="#e0402a" opacity="0.85"/>
<rect x="436.0" y="229.0" width="2.6" height="1.800" fill="#555"/>
<rect x="439.6" y="229.6" width="4.2" height="1" fill="#e0402a" opacity="0.85"/>
<rect x="436.0" y="232.6" width="2.6" height="1.800" fill="#555"/>
<rect x="439.6" y="233.2" width="4.2" height="1" fill="#e0402a" opacity="0.85"/>
<polyline points="439.1,238.0 433.0,241.5" fill="none" stroke="#7fd020" stroke-width="1.0" opacity="1" />
<polyline points="439.1,237.5 436.5,239.5" fill="none" stroke="#e8e020" stroke-width="0.8" opacity="1" />
<rect x="525.0" y="138.0" width="3.6" height="38" fill="#e8e8e8" stroke="#333" stroke-width="0.500"/>
<rect x="525.5" y="138.6" width="2.6" height="1.800" fill="#555"/>
<rect x="529.1" y="139.2" width="4.2" height="1" fill="#e0402a" opacity="0.85"/>
<rect x="525.5" y="142.2" width="2.6" height="1.800" fill="#555"/>
<rect x="529.1" y="142.8" width="4.2" height="1" fill="#e0402a" opacity="0.85"/>
<rect x="525.5" y="145.8" width="2.6" height="1.800" fill="#555"/>
<rect x="529.1" y="146.4" width="4.2" height="1" fill="#e0402a" opacity="0.85"/>
<rect x="525.5" y="149.4" width="2.6" height="1.800" fill="#555"/>
<rect x="529.1" y="150.0" width="4.2" height="1" fill="#e0402a" opacity="0.85"/>
<rect x="525.5" y="153.0" width="2.6" height="1.800" fill="#555"/>
<rect x="529.1" y="153.6" width="4.2" height="1" fill="#e0402a" opacity="0.85"/>
<rect x="525.5" y="156.6" width="2.6" height="1.800" fill="#555"/>
<rect x="529.1" y="157.2" width="4.2" height="1" fill="#e0402a" opacity="0.85"/>
<rect x="525.5" y="160.2" width="2.6" height="1.800" fill="#555"/>
<rect x="529.1" y="160.8" width="4.2" height="1" fill="#e0402a" opacity="0.85"/>
<rect x="525.5" y="163.8" width="2.6" height="1.800" fill="#555"/>
<rect x="529.1" y="164.4" width="4.2" height="1" fill="#e0402a" opacity="0.85"/>
<rect x="525.5" y="167.4" width="2.6" height="1.800" fill="#555"/>
<rect x="529.1" y="168.0" width="4.2" height="1" fill="#e0402a" opacity="0.85"/>
<rect x="525.5" y="171.0" width="2.6" height="1.800" fill="#555"/>
<rect x="529.1" y="171.6" width="4.2" height="1" fill="#e0402a" opacity="0.85"/>
<polyline points="528.6,176.0 522.5,179.5" fill="none" stroke="#7fd020" stroke-width="1.0" opacity="1" />
<polyline points="528.6,175.5 526.0,177.5" fill="none" stroke="#e8e020" stroke-width="0.8" opacity="1" />
<rect x="541.0" y="124.0" width="3.6" height="40" fill="#e8e8e8" stroke="#333" stroke-width="0.500"/>
<rect x="541.5" y="124.6" width="2.6" height="1.800" fill="#555"/>
<rect x="545.1" y="125.2" width="4.2" height="1" fill="#e0402a" opacity="0.85"/>
<rect x="541.5" y="128.2" width="2.6" height="1.800" fill="#555"/>
<rect x="545.1" y="128.8" width="4.2" height="1" fill="#e0402a" opacity="0.85"/>
<rect x="541.5" y="131.8" width="2.6" height="1.800" fill="#555"/>
<rect x="545.1" y="132.4" width="4.2" height="1" fill="#e0402a" opacity="0.85"/>
<rect x="541.5" y="135.4" width="2.6" height="1.800" fill="#555"/>
<rect x="545.1" y="136.0" width="4.2" height="1" fill="#e0402a" opacity="0.85"/>
<rect x="541.5" y="139.0" width="2.6" height="1.800" fill="#555"/>
<rect x="545.1" y="139.6" width="4.2" height="1" fill="#e0402a" opacity="0.85"/>
<rect x="541.5" y="142.6" width="2.6" height="1.800" fill="#555"/>
<rect x="545.1" y="143.2" width="4.2" height="1" fill="#e0402a" opacity="0.85"/>
<rect x="541.5" y="146.2" width="2.6" height="1.800" fill="#555"/>
<rect x="545.1" y="146.8" width="4.2" height="1" fill="#e0402a" opacity="0.85"/>
<rect x="541.5" y="149.8" width="2.6" height="1.800" fill="#555"/>
<rect x="545.1" y="150.4" width="4.2" height="1" fill="#e0402a" opacity="0.85"/>
<rect x="541.5" y="153.4" width="2.6" height="1.800" fill="#555"/>
<rect x="545.1" y="154.0" width="4.2" height="1" fill="#e0402a" opacity="0.85"/>
<rect x="541.5" y="157.0" width="2.6" height="1.800" fill="#555"/>
<rect x="545.1" y="157.6" width="4.2" height="1" fill="#e0402a" opacity="0.85"/>
<rect x="541.5" y="160.6" width="2.6" height="1.800" fill="#555"/>
<rect x="545.1" y="161.2" width="4.2" height="1" fill="#e0402a" opacity="0.85"/>
<polyline points="544.6,164.0 538.5,167.5" fill="none" stroke="#7fd020" stroke-width="1.0" opacity="1" />
<polyline points="544.6,163.5 542.0,165.5" fill="none" stroke="#e8e020" stroke-width="0.8" opacity="1" />
<rect x="634.0" y="176.0" width="3.6" height="42" fill="#e8e8e8" stroke="#333" stroke-width="0.500"/>
<rect x="634.5" y="176.6" width="2.6" height="1.800" fill="#555"/>
<rect x="638.1" y="177.2" width="4.2" height="1" fill="#e0402a" opacity="0.85"/>
<rect x="634.5" y="180.2" width="2.6" height="1.800" fill="#555"/>
<rect x="638.1" y="180.8" width="4.2" height="1" fill="#e0402a" opacity="0.85"/>
<rect x="634.5" y="183.8" width="2.6" height="1.800" fill="#555"/>
<rect x="638.1" y="184.4" width="4.2" height="1" fill="#e0402a" opacity="0.85"/>
<rect x="634.5" y="187.4" width="2.6" height="1.800" fill="#555"/>
<rect x="638.1" y="188.0" width="4.2" height="1" fill="#e0402a" opacity="0.85"/>
<rect x="634.5" y="191.0" width="2.6" height="1.800" fill="#555"/>
<rect x="638.1" y="191.6" width="4.2" height="1" fill="#e0402a" opacity="0.85"/>
<rect x="634.5" y="194.6" width="2.6" height="1.800" fill="#555"/>
<rect x="638.1" y="195.2" width="4.2" height="1" fill="#e0402a" opacity="0.85"/>
<rect x="634.5" y="198.2" width="2.6" height="1.800" fill="#555"/>
<rect x="638.1" y="198.8" width="4.2" height="1" fill="#e0402a" opacity="0.85"/>
<rect x="634.5" y="201.8" width="2.6" height="1.800" fill="#555"/>
<rect x="638.1" y="202.4" width="4.2" height="1" fill="#e0402a" opacity="0.85"/>
<rect x="634.5" y="205.4" width="2.6" height="1.800" fill="#555"/>
<rect x="638.1" y="206.0" width="4.2" height="1" fill="#e0402a" opacity="0.85"/>
<rect x="634.5" y="209.0" width="2.6" height="1.800" fill="#555"/>
<rect x="638.1" y="209.6" width="4.2" height="1" fill="#e0402a" opacity="0.85"/>
<rect x="634.5" y="212.6" width="2.6" height="1.800" fill="#555"/>
<rect x="638.1" y="213.2" width="4.2" height="1" fill="#e0402a" opacity="0.85"/>
<polyline points="637.6,218.0 631.5,221.5" fill="none" stroke="#7fd020" stroke-width="1.0" opacity="1" />
<polyline points="637.6,217.5 635.0,219.5" fill="none" stroke="#e8e020" stroke-width="0.8" opacity="1" />
<rect x="650.0" y="187.0" width="3.6" height="42" fill="#e8e8e8" stroke="#333" stroke-width="0.500"/>
<rect x="650.5" y="187.6" width="2.6" height="1.800" fill="#555"/>
<rect x="654.1" y="188.2" width="4.2" height="1" fill="#e0402a" opacity="0.85"/>
<rect x="650.5" y="191.2" width="2.6" height="1.800" fill="#555"/>
<rect x="654.1" y="191.8" width="4.2" height="1" fill="#e0402a" opacity="0.85"/>
<rect x="650.5" y="194.8" width="2.6" height="1.800" fill="#555"/>
<rect x="654.1" y="195.4" width="4.2" height="1" fill="#e0402a" opacity="0.85"/>
<rect x="650.5" y="198.4" width="2.6" height="1.800" fill="#555"/>
<rect x="654.1" y="199.0" width="4.2" height="1" fill="#e0402a" opacity="0.85"/>
<rect x="650.5" y="202.0" width="2.6" height="1.800" fill="#555"/>
<rect x="654.1" y="202.6" width="4.2" height="1" fill="#e0402a" opacity="0.85"/>
<rect x="650.5" y="205.6" width="2.6" height="1.800" fill="#555"/>
<rect x="654.1" y="206.2" width="4.2" height="1" fill="#e0402a" opacity="0.85"/>
<rect x="650.5" y="209.2" width="2.6" height="1.800" fill="#555"/>
<rect x="654.1" y="209.8" width="4.2" height="1" fill="#e0402a" opacity="0.85"/>
<rect x="650.5" y="212.8" width="2.6" height="1.800" fill="#555"/>
<rect x="654.1" y="213.4" width="4.2" height="1" fill="#e0402a" opacity="0.85"/>
<rect x="650.5" y="216.4" width="2.6" height="1.800" fill="#555"/>
<rect x="654.1" y="217.0" width="4.2" height="1" fill="#e0402a" opacity="0.85"/>
<rect x="650.5" y="220.0" width="2.6" height="1.800" fill="#555"/>
<rect x="654.1" y="220.6" width="4.2" height="1" fill="#e0402a" opacity="0.85"/>
<rect x="650.5" y="223.6" width="2.6" height="1.800" fill="#555"/>
<rect x="654.1" y="224.2" width="4.2" height="1" fill="#e0402a" opacity="0.85"/>
<polyline points="653.6,229.0 647.5,232.5" fill="none" stroke="#7fd020" stroke-width="1.0" opacity="1" />
<polyline points="653.6,228.5 651.0,230.5" fill="none" stroke="#e8e020" stroke-width="0.8" opacity="1" />
<rect x="662.0" y="197.0" width="3.6" height="42" fill="#e8e8e8" stroke="#333" stroke-width="0.500"/>
<rect x="662.5" y="197.6" width="2.6" height="1.800" fill="#555"/>
<rect x="666.1" y="198.2" width="4.2" height="1" fill="#e0402a" opacity="0.85"/>
<rect x="662.5" y="201.2" width="2.6" height="1.800" fill="#555"/>
<rect x="666.1" y="201.8" width="4.2" height="1" fill="#e0402a" opacity="0.85"/>
<rect x="662.5" y="204.8" width="2.6" height="1.800" fill="#555"/>
<rect x="666.1" y="205.4" width="4.2" height="1" fill="#e0402a" opacity="0.85"/>
<rect x="662.5" y="208.4" width="2.6" height="1.800" fill="#555"/>
<rect x="666.1" y="209.0" width="4.2" height="1" fill="#e0402a" opacity="0.85"/>
<rect x="662.5" y="212.0" width="2.6" height="1.800" fill="#555"/>
<rect x="666.1" y="212.6" width="4.2" height="1" fill="#e0402a" opacity="0.85"/>
<rect x="662.5" y="215.6" width="2.6" height="1.800" fill="#555"/>
<rect x="666.1" y="216.2" width="4.2" height="1" fill="#e0402a" opacity="0.85"/>
<rect x="662.5" y="219.2" width="2.6" height="1.800" fill="#555"/>
<rect x="666.1" y="219.8" width="4.2" height="1" fill="#e0402a" opacity="0.85"/>
<rect x="662.5" y="222.8" width="2.6" height="1.800" fill="#555"/>
<rect x="666.1" y="223.4" width="4.2" height="1" fill="#e0402a" opacity="0.85"/>
<rect x="662.5" y="226.4" width="2.6" height="1.800" fill="#555"/>
<rect x="666.1" y="227.0" width="4.2" height="1" fill="#e0402a" opacity="0.85"/>
<rect x="662.5" y="230.0" width="2.6" height="1.800" fill="#555"/>
<rect x="666.1" y="230.6" width="4.2" height="1" fill="#e0402a" opacity="0.85"/>
<rect x="662.5" y="233.6" width="2.6" height="1.800" fill="#555"/>
<rect x="666.1" y="234.2" width="4.2" height="1" fill="#e0402a" opacity="0.85"/>
<polyline points="665.6,239.0 659.5,242.5" fill="none" stroke="#7fd020" stroke-width="1.0" opacity="1" />
<polyline points="665.6,238.5 663.0,240.5" fill="none" stroke="#e8e020" stroke-width="0.8" opacity="1" />
<rect x="674.0" y="204.0" width="3.6" height="42" fill="#e8e8e8" stroke="#333" stroke-width="0.500"/>
<rect x="674.5" y="204.6" width="2.6" height="1.800" fill="#555"/>
<rect x="678.1" y="205.2" width="4.2" height="1" fill="#e0402a" opacity="0.85"/>
<rect x="674.5" y="208.2" width="2.6" height="1.800" fill="#555"/>
<rect x="678.1" y="208.8" width="4.2" height="1" fill="#e0402a" opacity="0.85"/>
<rect x="674.5" y="211.8" width="2.6" height="1.800" fill="#555"/>
<rect x="678.1" y="212.4" width="4.2" height="1" fill="#e0402a" opacity="0.85"/>
<rect x="674.5" y="215.4" width="2.6" height="1.800" fill="#555"/>
<rect x="678.1" y="216.0" width="4.2" height="1" fill="#e0402a" opacity="0.85"/>
<rect x="674.5" y="219.0" width="2.6" height="1.800" fill="#555"/>
<rect x="678.1" y="219.6" width="4.2" height="1" fill="#e0402a" opacity="0.85"/>
<rect x="674.5" y="222.6" width="2.6" height="1.800" fill="#555"/>
<rect x="678.1" y="223.2" width="4.2" height="1" fill="#e0402a" opacity="0.85"/>
<rect x="674.5" y="226.2" width="2.6" height="1.800" fill="#555"/>
<rect x="678.1" y="226.8" width="4.2" height="1" fill="#e0402a" opacity="0.85"/>
<rect x="674.5" y="229.8" width="2.6" height="1.800" fill="#555"/>
<rect x="678.1" y="230.4" width="4.2" height="1" fill="#e0402a" opacity="0.85"/>
<rect x="674.5" y="233.4" width="2.6" height="1.800" fill="#555"/>
<rect x="678.1" y="234.0" width="4.2" height="1" fill="#e0402a" opacity="0.85"/>
<rect x="674.5" y="237.0" width="2.6" height="1.800" fill="#555"/>
<rect x="678.1" y="237.6" width="4.2" height="1" fill="#e0402a" opacity="0.85"/>
<rect x="674.5" y="240.6" width="2.6" height="1.800" fill="#555"/>
<rect x="678.1" y="241.2" width="4.2" height="1" fill="#e0402a" opacity="0.85"/>
<polyline points="677.6,246.0 671.5,249.5" fill="none" stroke="#7fd020" stroke-width="1.0" opacity="1" />
<polyline points="677.6,245.5 675.0,247.5" fill="none" stroke="#e8e020" stroke-width="0.8" opacity="1" />
<rect x="685.0" y="212.0" width="3.6" height="42" fill="#e8e8e8" stroke="#333" stroke-width="0.500"/>
<rect x="685.5" y="212.6" width="2.6" height="1.800" fill="#555"/>
<rect x="689.1" y="213.2" width="4.2" height="1" fill="#e0402a" opacity="0.85"/>
<rect x="685.5" y="216.2" width="2.6" height="1.800" fill="#555"/>
<rect x="689.1" y="216.8" width="4.2" height="1" fill="#e0402a" opacity="0.85"/>
<rect x="685.5" y="219.8" width="2.6" height="1.800" fill="#555"/>
<rect x="689.1" y="220.4" width="4.2" height="1" fill="#e0402a" opacity="0.85"/>
<rect x="685.5" y="223.4" width="2.6" height="1.800" fill="#555"/>
<rect x="689.1" y="224.0" width="4.2" height="1" fill="#e0402a" opacity="0.85"/>
<rect x="685.5" y="227.0" width="2.6" height="1.800" fill="#555"/>
<rect x="689.1" y="227.6" width="4.2" height="1" fill="#e0402a" opacity="0.85"/>
<rect x="685.5" y="230.6" width="2.6" height="1.800" fill="#555"/>
<rect x="689.1" y="231.2" width="4.2" height="1" fill="#e0402a" opacity="0.85"/>
<rect x="685.5" y="234.2" width="2.6" height="1.800" fill="#555"/>
<rect x="689.1" y="234.8" width="4.2" height="1" fill="#e0402a" opacity="0.85"/>
<rect x="685.5" y="237.8" width="2.6" height="1.800" fill="#555"/>
<rect x="689.1" y="238.4" width="4.2" height="1" fill="#e0402a" opacity="0.85"/>
<rect x="685.5" y="241.4" width="2.6" height="1.800" fill="#555"/>
<rect x="689.1" y="242.0" width="4.2" height="1" fill="#e0402a" opacity="0.85"/>
<rect x="685.5" y="245.0" width="2.6" height="1.800" fill="#555"/>
<rect x="689.1" y="245.6" width="4.2" height="1" fill="#e0402a" opacity="0.85"/>
<rect x="685.5" y="248.6" width="2.6" height="1.800" fill="#555"/>
<rect x="689.1" y="249.2" width="4.2" height="1" fill="#e0402a" opacity="0.85"/>
<polyline points="688.6,254.0 682.5,257.5" fill="none" stroke="#7fd020" stroke-width="1.0" opacity="1" />
<polyline points="688.6,253.5 686.0,255.5" fill="none" stroke="#e8e020" stroke-width="0.8" opacity="1" />
<rect x="536.5" y="367.0" width="3.4" height="41" fill="#fff" stroke="#333" stroke-width="0.4" stroke-dasharray="1.5 1"/>
<rect x="537.1" y="367.8" width="2.2" height="1.3" fill="#555"/>
<rect x="537.1" y="371.0" width="2.2" height="1.3" fill="#555"/>
<rect x="537.1" y="374.2" width="2.2" height="1.3" fill="#555"/>
<rect x="537.1" y="377.4" width="2.2" height="1.3" fill="#555"/>
<rect x="537.1" y="380.6" width="2.2" height="1.3" fill="#555"/>
<rect x="537.1" y="383.8" width="2.2" height="1.3" fill="#555"/>
<rect x="537.1" y="387.0" width="2.2" height="1.3" fill="#555"/>
<rect x="537.1" y="390.2" width="2.2" height="1.3" fill="#555"/>
<rect x="537.1" y="393.4" width="2.2" height="1.3" fill="#555"/>
<rect x="537.1" y="396.6" width="2.2" height="1.3" fill="#555"/>
<rect x="537.1" y="399.8" width="2.2" height="1.3" fill="#555"/>
<rect x="537.1" y="403.0" width="2.2" height="1.3" fill="#555"/>
<polyline points="539.9,408.0 534.5,411.0" fill="none" stroke="#c8d020" stroke-width="1.0" opacity="1" />
<rect x="545.5" y="358.0" width="3.4" height="45" fill="#fff" stroke="#333" stroke-width="0.4" stroke-dasharray="1.5 1"/>
<rect x="546.1" y="358.8" width="2.2" height="1.3" fill="#555"/>
<rect x="546.1" y="362.0" width="2.2" height="1.3" fill="#555"/>
<rect x="546.1" y="365.2" width="2.2" height="1.3" fill="#555"/>
<rect x="546.1" y="368.4" width="2.2" height="1.3" fill="#555"/>
<rect x="546.1" y="371.6" width="2.2" height="1.3" fill="#555"/>
<rect x="546.1" y="374.8" width="2.2" height="1.3" fill="#555"/>
<rect x="546.1" y="378.0" width="2.2" height="1.3" fill="#555"/>
<rect x="546.1" y="381.2" width="2.2" height="1.3" fill="#555"/>
<rect x="546.1" y="384.4" width="2.2" height="1.3" fill="#555"/>
<rect x="546.1" y="387.6" width="2.2" height="1.3" fill="#555"/>
<rect x="546.1" y="390.8" width="2.2" height="1.3" fill="#555"/>
<rect x="546.1" y="394.0" width="2.2" height="1.3" fill="#555"/>
<rect x="546.1" y="397.2" width="2.2" height="1.3" fill="#555"/>
<rect x="546.1" y="400.4" width="2.2" height="1.3" fill="#555"/>
<polyline points="548.9,403.0 543.5,406.0" fill="none" stroke="#c8d020" stroke-width="1.0" opacity="1" />
<rect x="555.0" y="352.0" width="3.4" height="45" fill="#fff" stroke="#333" stroke-width="0.4" stroke-dasharray="1.5 1"/>
<rect x="555.6" y="352.8" width="2.2" height="1.3" fill="#555"/>
<rect x="555.6" y="356.0" width="2.2" height="1.3" fill="#555"/>
<rect x="555.6" y="359.2" width="2.2" height="1.3" fill="#555"/>
<rect x="555.6" y="362.4" width="2.2" height="1.3" fill="#555"/>
<rect x="555.6" y="365.6" width="2.2" height="1.3" fill="#555"/>
<rect x="555.6" y="368.8" width="2.2" height="1.3" fill="#555"/>
<rect x="555.6" y="372.0" width="2.2" height="1.3" fill="#555"/>
<rect x="555.6" y="375.2" width="2.2" height="1.3" fill="#555"/>
<rect x="555.6" y="378.4" width="2.2" height="1.3" fill="#555"/>
<rect x="555.6" y="381.6" width="2.2" height="1.3" fill="#555"/>
<rect x="555.6" y="384.8" width="2.2" height="1.3" fill="#555"/>
<rect x="555.6" y="388.0" width="2.2" height="1.3" fill="#555"/>
<rect x="555.6" y="391.2" width="2.2" height="1.3" fill="#555"/>
<rect x="555.6" y="394.4" width="2.2" height="1.3" fill="#555"/>
<polyline points="558.4,397.0 553.0,400.0" fill="none" stroke="#c8d020" stroke-width="1.0" opacity="1" />
<rect x="564.0" y="345.0" width="3.4" height="45" fill="#fff" stroke="#333" stroke-width="0.4" stroke-dasharray="1.5 1"/>
<rect x="564.6" y="345.8" width="2.2" height="1.3" fill="#555"/>
<rect x="564.6" y="349.0" width="2.2" height="1.3" fill="#555"/>
<rect x="564.6" y="352.2" width="2.2" height="1.3" fill="#555"/>
<rect x="564.6" y="355.4" width="2.2" height="1.3" fill="#555"/>
<rect x="564.6" y="358.6" width="2.2" height="1.3" fill="#555"/>
<rect x="564.6" y="361.8" width="2.2" height="1.3" fill="#555"/>
<rect x="564.6" y="365.0" width="2.2" height="1.3" fill="#555"/>
<rect x="564.6" y="368.2" width="2.2" height="1.3" fill="#555"/>
<rect x="564.6" y="371.4" width="2.2" height="1.3" fill="#555"/>
<rect x="564.6" y="374.6" width="2.2" height="1.3" fill="#555"/>
<rect x="564.6" y="377.8" width="2.2" height="1.3" fill="#555"/>
<rect x="564.6" y="381.0" width="2.2" height="1.3" fill="#555"/>
<rect x="564.6" y="384.2" width="2.2" height="1.3" fill="#555"/>
<rect x="564.6" y="387.4" width="2.2" height="1.3" fill="#555"/>
<polyline points="567.4,390.0 562.0,393.0" fill="none" stroke="#c8d020" stroke-width="1.0" opacity="1" />
<rect x="575.0" y="337.0" width="3.4" height="43" fill="#fff" stroke="#333" stroke-width="0.4" stroke-dasharray="1.5 1"/>
<rect x="575.6" y="337.8" width="2.2" height="1.3" fill="#555"/>
<rect x="575.6" y="341.0" width="2.2" height="1.3" fill="#555"/>
<rect x="575.6" y="344.2" width="2.2" height="1.3" fill="#555"/>
<rect x="575.6" y="347.4" width="2.2" height="1.3" fill="#555"/>
<rect x="575.6" y="350.6" width="2.2" height="1.3" fill="#555"/>
<rect x="575.6" y="353.8" width="2.2" height="1.3" fill="#555"/>
<rect x="575.6" y="357.0" width="2.2" height="1.3" fill="#555"/>
<rect x="575.6" y="360.2" width="2.2" height="1.3" fill="#555"/>
<rect x="575.6" y="363.4" width="2.2" height="1.3" fill="#555"/>
<rect x="575.6" y="366.6" width="2.2" height="1.3" fill="#555"/>
<rect x="575.6" y="369.8" width="2.2" height="1.3" fill="#555"/>
<rect x="575.6" y="373.0" width="2.2" height="1.3" fill="#555"/>
<rect x="575.6" y="376.2" width="2.2" height="1.3" fill="#555"/>
<polyline points="578.4,380.0 573.0,383.0" fill="none" stroke="#c8d020" stroke-width="1.0" opacity="1" />
<rect x="586.0" y="330.0" width="3.4" height="40" fill="#fff" stroke="#333" stroke-width="0.4" stroke-dasharray="1.5 1"/>
<rect x="586.6" y="330.8" width="2.2" height="1.3" fill="#555"/>
<rect x="586.6" y="334.0" width="2.2" height="1.3" fill="#555"/>
<rect x="586.6" y="337.2" width="2.2" height="1.3" fill="#555"/>
<rect x="586.6" y="340.4" width="2.2" height="1.3" fill="#555"/>
<rect x="586.6" y="343.6" width="2.2" height="1.3" fill="#555"/>
<rect x="586.6" y="346.8" width="2.2" height="1.3" fill="#555"/>
<rect x="586.6" y="350.0" width="2.2" height="1.3" fill="#555"/>
<rect x="586.6" y="353.2" width="2.2" height="1.3" fill="#555"/>
<rect x="586.6" y="356.4" width="2.2" height="1.3" fill="#555"/>
<rect x="586.6" y="359.6" width="2.2" height="1.3" fill="#555"/>
<rect x="586.6" y="362.8" width="2.2" height="1.3" fill="#555"/>
<rect x="586.6" y="366.0" width="2.2" height="1.3" fill="#555"/>
<polyline points="589.4,370.0 584.0,373.0" fill="none" stroke="#c8d020" stroke-width="1.0" opacity="1" />
<rect x="601.0" y="320.0" width="3.4" height="42" fill="#fff" stroke="#333" stroke-width="0.4" stroke-dasharray="1.5 1"/>
<rect x="601.6" y="320.8" width="2.2" height="1.3" fill="#555"/>
<rect x="601.6" y="324.0" width="2.2" height="1.3" fill="#555"/>
<rect x="601.6" y="327.2" width="2.2" height="1.3" fill="#555"/>
<rect x="601.6" y="330.4" width="2.2" height="1.3" fill="#555"/>
<rect x="601.6" y="333.6" width="2.2" height="1.3" fill="#555"/>
<rect x="601.6" y="336.8" width="2.2" height="1.3" fill="#555"/>
<rect x="601.6" y="340.0" width="2.2" height="1.3" fill="#555"/>
<rect x="601.6" y="343.2" width="2.2" height="1.3" fill="#555"/>
<rect x="601.6" y="346.4" width="2.2" height="1.3" fill="#555"/>
<rect x="601.6" y="349.6" width="2.2" height="1.3" fill="#555"/>
<rect x="601.6" y="352.8" width="2.2" height="1.3" fill="#555"/>
<rect x="601.6" y="356.0" width="2.2" height="1.3" fill="#555"/>
<rect x="601.6" y="359.2" width="2.2" height="1.3" fill="#555"/>
<polyline points="604.4,362.0 599.0,365.0" fill="none" stroke="#c8d020" stroke-width="1.0" opacity="1" />
<rect x="385" y="160" width="4" height="5" fill="#fff" stroke="#222" stroke-width="0.5"/>
<text x="385.9" y="164.3" font-family="Liberation Sans, sans-serif" font-size="4.6" font-weight="bold" fill="#222">F</text>
<polyline points="389.0,165.0 383.0,168.5" fill="none" stroke="#7fd020" stroke-width="1.0" opacity="1" />
<polyline points="389.5,163.5 393.0,163.0" fill="none" stroke="#e0402a" stroke-width="0.8" opacity="1" />
<rect x="723" y="199" width="4" height="5" fill="#fff" stroke="#222" stroke-width="0.5"/>
<text x="723.9" y="203.3" font-family="Liberation Sans, sans-serif" font-size="4.6" font-weight="bold" fill="#222">F</text>
<polyline points="727.0,204.0 721.0,207.5" fill="none" stroke="#7fd020" stroke-width="1.0" opacity="1" />
<polyline points="727.5,202.5 731.0,202.0" fill="none" stroke="#e0402a" stroke-width="0.8" opacity="1" />
<rect x="504" y="385" width="4" height="5" fill="#fff" stroke="#222" stroke-width="0.5"/>
<text x="504.9" y="389.3" font-family="Liberation Sans, sans-serif" font-size="4.6" font-weight="bold" fill="#222">F</text>
<polyline points="508.0,390.0 502.0,393.5" fill="none" stroke="#7fd020" stroke-width="1.0" opacity="1" />
<polyline points="508.5,388.5 512.0,388.0" fill="none" stroke="#e0402a" stroke-width="0.8" opacity="1" />
</g>
<g id="triad">
<polyline points="535.0,309.0 535.0,295.0" fill="none" stroke="#10108a" stroke-width="1.6" opacity="1" />
<polygon points="532.4,298.0 537.6,298.0 535.0,293.0" fill="#10108a" stroke="none" stroke-width="0.5" opacity="1" />
<circle cx="535" cy="297.5" r="2.6" fill="#10108a"/>
<polyline points="535.0,309.0 547.0,301.0" fill="none" stroke="#18a018" stroke-width="1.8" opacity="1" />
<polygon points="544.0,299.0 548.0,304.5 552.0,297.0" fill="#18a018" stroke="none" stroke-width="0.5" opacity="1" />
<polyline points="535.0,309.0 546.0,317.0" fill="none" stroke="#b01a10" stroke-width="1.8" opacity="1" />
<polygon points="543.0,319.5 547.5,313.5 551.0,321.0" fill="#b01a10" stroke="none" stroke-width="0.5" opacity="1" />
<circle cx="535" cy="309" r="3.2" fill="#fff" stroke="#2a4ab0" stroke-width="0.5"/>
<path d="M535,309 L535,305.8 A3.2,3.2 0 0 0 531.8,309 Z M535,309 L535,312.2 A3.2,3.2 0 0 0 538.2,309 Z" fill="#2a4ab0" stroke="none" stroke-width="0" opacity="1" />
<text x="530" y="286" font-family="Liberation Sans, sans-serif" font-size="8.5" font-weight="bold" fill="#1515d0">z</text>
<text x="551" y="301" font-family="Liberation Sans, sans-serif" font-size="8.5" font-weight="bold" fill="#20c020">y</text>
<text x="553" y="321" font-family="Liberation Sans, sans-serif" font-size="8" font-weight="bold" fill="#e01010">x</text>
<text x="530" y="194" font-family="Liberation Sans, sans-serif" font-size="10" font-weight="bold" fill="#18d8e0">x</text>
<text x="548" y="208" font-family="Liberation Sans, sans-serif" font-size="10" font-weight="bold" fill="#18d8e0">x</text>
<text x="479" y="246" font-family="Liberation Sans, sans-serif" font-size="9" font-weight="bold" fill="#18d8e0">z</text>
<text x="484" y="248" font-family="Liberation Sans, sans-serif" font-size="10" font-weight="bold" fill="#18d8e0">x</text>
<text x="594" y="239" font-family="Liberation Sans, sans-serif" font-size="10" font-weight="bold" fill="#18d8e0">y</text>
<text x="580" y="246" font-family="Liberation Sans, sans-serif" font-size="9" font-weight="bold" fill="#18d8e0">z</text>
<text x="586" y="250" font-family="Liberation Sans, sans-serif" font-size="10" font-weight="bold" fill="#18d8e0">y</text>
<text x="600" y="277" font-family="Liberation Sans, sans-serif" font-size="10" font-weight="bold" fill="#18d8e0">x</text>
<text x="584" y="290" font-family="Liberation Sans, sans-serif" font-size="10" font-weight="bold" fill="#18d8e0">x</text>
<text x="553" y="275" font-family="Liberation Sans, sans-serif" font-size="10" font-weight="bold" fill="#18d8e0">z</text>
<text x="527" y="178" font-family="Liberation Sans, sans-serif" font-size="9" font-weight="bold" fill="#18d8e0">z</text>
<polyline points="527.0,203.0 527.0,182.0" fill="none" stroke="#109a9a" stroke-width="1.8" opacity="1" />
<polygon points="523.5,186.0 530.5,186.0 527.0,179.0" fill="#109a9a" stroke="none" stroke-width="0.5" opacity="1" />
<polyline points="527.0,202.0 541.0,204.0" fill="none" stroke="#109a9a" stroke-width="1.6" opacity="1" />
<polyline points="577.0,257.0 592.0,247.0" fill="none" stroke="#109a9a" stroke-width="1.6" opacity="1" />
<polygon points="589.0,244.0 596.0,244.0 592.0,251.0" fill="#109a9a" stroke="none" stroke-width="0.5" opacity="1" />
<polyline points="577.0,257.0 598.0,268.0" fill="none" stroke="#109a9a" stroke-width="1.6" opacity="1" />
<polygon points="595.0,270.0 601.0,264.0 602.0,272.0" fill="#109a9a" stroke="none" stroke-width="0.5" opacity="1" />
<polyline points="577.0,257.0 583.0,279.0" fill="none" stroke="#109a9a" stroke-width="1.6" opacity="1" />
<polygon points="580.0,277.0 587.0,276.0 585.0,283.0" fill="#109a9a" stroke="none" stroke-width="0.5" opacity="1" />
<polygon points="574.0,253.0 581.0,251.0 579.0,262.0 573.0,260.0" fill="#109a9a" stroke="none" stroke-width="0.5" opacity="1" />
</g>
<g id="play">
<ellipse cx="479.3" cy="270" rx="93.7" ry="88" fill="none" stroke="#08f4f4" stroke-width="2.4"/>
<polygon points="443.0,227.0 532.0,270.0 443.0,313.0" fill="#00ffff" stroke="none" stroke-width="0.5" opacity="1" />
</g>
<!--MODEL_END-->
</svg>

<!-- title bar -->
<svg class="abs" style="left:3px;top:3px" width="9" height="9" viewBox="0 0 9 9"><rect x="0.500" y="0.500" width="8" height="8" fill="#fff" stroke="#a33" stroke-width="1"/><text x="1.800" y="7.400" font-family="Liberation Sans, DejaVu Sans, sans-serif" font-size="8" font-weight="bold" fill="#a02838" textLength="5.400" lengthAdjust="spacingAndGlyphs">2</text></svg>
<div id="title" class="t">GO2cam &lt; © GO2cam International 2009 - 2022 &gt;<span style="margin-left:11px">"Mill Classic"</span><span style="margin-left:5.600px;font-size:7.200px">V6.09.203 - [3X + 2 machining test.PCE*]</span></div>
<svg class="abs" style="left:880px;top:2px" width="78" height="12" viewBox="0 0 78 12"><g stroke="#b0b0b0" fill="none" stroke-width="0.8"><path d="M3.5 4.5h6"/><rect x="31.5" y="3.5" width="5" height="4.5"/><path d="M32.5 3.5v-1h5v4.5h-1"/><path d="M61.5 2.5l5.5 6M67 2.5l-5.5 6"/></g></svg>
<!-- menu -->
<div class="t menu" style="left:5px">File</div>
<div class="t menu" style="left:26px">Edit</div>
<div class="t menu" style="left:49px">Display</div>
<div class="t menu" style="left:84px">Tools</div>
<div class="t menu" style="left:111px">Opelists</div>
<div class="t menu" style="left:148px">Help</div>
<div class="t menu" style="left:173px">GO2operator</div>
<div id="sep1" class="abs"></div>

<!-- tabs -->
<div class="tab" style="left:8px;width:39px"><span style="left:15px">Design</span></div>
<div class="tab" style="left:86px;width:44px"><span style="left:16px">Machine</span></div>
<div id="toolbar" class="abs"></div>
<div class="abs" style="left:46px;top:47px;width:331px;height:1px;background:#9a9a9a"></div>
<div class="tab" style="left:46px;top:31.500px;width:40px;height:16.500px;background:#dcdcdc"><span style="left:17px;top:4.500px">Milling</span></div>
<!-- toolbar items -->
<svg class="abs" style="left:7px;top:32px" width="330" height="40" viewBox="7 32 330 40">
<!-- design pencil -->
<path d="M11 37l2-1.600l7 7l-1.400 2.200l-2.800.6z" fill="#f0b828" stroke="#8a5a10" stroke-width="0.400"/><path d="M11 37l2-1.600l1.400 1.400l-2 1.600z" fill="#d03828"/><path d="M17.500 44.800l2.500.4l-.8-2.400z" fill="#333"/><path d="M10 45.500h8" stroke="#c09a50" stroke-width="0.600"/>
<!-- milling icon -->
<path d="M50 41l4-2l6 1.500v4l-6 2l-4-1.500z" fill="#f0b0a0" stroke="#a06050" stroke-width="0.400"/><path d="M50 41l4 1.500l6-2" fill="none" stroke="#a06050" stroke-width="0.400"/><rect x="55.500" y="34" width="2.400" height="6" fill="#777" stroke="#333" stroke-width="0.300"/><path d="M53 38h4v2.500h-4z" fill="#d84040"/>
<!-- machine icon -->
<rect x="90.500" y="36.500" width="8" height="8.500" fill="#eee" stroke="#222" stroke-width="0.800"/><rect x="92" y="38" width="3.500" height="4" fill="#444"/><path d="M96.500 38.500v5" stroke="#444" stroke-width="1"/><path d="M89.500 45.500h10" stroke="#222" stroke-width="1"/>
<!-- Standard -->
<g id="mill1"><path d="M9.500 58l4-1.800l5.500 1.400v5l-5.500 2l-4-1.600z" fill="#f4b8ac" stroke="#b07060" stroke-width="0.400"/><path d="M9.500 58l4 1.400l5.500-1.800M13.500 59.400v5.200" fill="none" stroke="#b07060" stroke-width="0.400"/><path d="M10 56h4v3h-4z" fill="#d83030"/><rect x="13.800" y="52" width="2" height="5.500" fill="#888" stroke="#333" stroke-width="0.300"/></g>
<g transform="translate(74,0)"><path d="M9.500 58l4-1.800l5.500 1.400v5l-5.500 2l-4-1.600z" fill="#f4b8ac" stroke="#b07060" stroke-width="0.400"/><path d="M9.500 58l4 1.400l5.500-1.800M13.500 59.400v5.200" fill="none" stroke="#b07060" stroke-width="0.400"/><path d="M10 56h4v3h-4z" fill="#d83030"/><rect x="13.800" y="52" width="2" height="5.500" fill="#888" stroke="#333" stroke-width="0.300"/></g>
<!-- Hole -->
<path d="M147.500 57l3.500-1.500l6 1.200v6l-6 2l-3.500-1.500z" fill="#d83838" stroke="#802020" stroke-width="0.400"/><path d="M151 56v8" stroke="#fff" stroke-width="0.600"/><path d="M152 57.500l4.500.8v4l-4.500 1.400z" fill="#f8d0d0"/><rect x="153.500" y="52.500" width="1.800" height="4.500" fill="#888" stroke="#333" stroke-width="0.300"/>
<!-- Specific -->
<ellipse cx="198" cy="58.500" rx="4.200" ry="6" fill="#e8c8a0" stroke="#8a6030" stroke-width="0.700"/><ellipse cx="198.400" cy="58.800" rx="2.400" ry="3.800" fill="none" stroke="#8a6030" stroke-width="0.600"/><ellipse cx="198.600" cy="59" rx="1" ry="1.800" fill="#8a6030"/>
<!-- Shape -->
<path d="M258.500 57.500l4-2.500l6 1.500v5l-5 3l-5-2z" fill="#e8c070" stroke="#806020" stroke-width="0.400"/><path d="M260 55.500c2-2 5-2 7.500 0l-1 3l-5.500-.5z" fill="#f4e060" stroke="#a08020" stroke-width="0.400"/><path d="M258.500 60l5 1.500v3l-5-2z" fill="#f0a0a0"/><path d="M257.500 59.500l4.500 4" stroke="#333" stroke-width="1"/>
<!-- NC file shield -->
<path d="M314 52.500l2 1l2-1l2 1l2-1v8c0 2.400-2 4-4 5c-2-1-4-2.600-4-5z" fill="#4a64c0" stroke="#2a3f90" stroke-width="0.400"/><g fill="#cfd8f8"><circle cx="316.500" cy="56.500" r=".6"/><circle cx="319.500" cy="56.500" r=".6"/><circle cx="318" cy="59" r=".6"/><circle cx="316.500" cy="61" r=".6"/><circle cx="319.500" cy="61" r=".6"/></g>
<!-- dropdown arrows -->
<path d="M185.500 66.500l1.800 1.800l1.800-1.800zM250.500 66.500l1.800 1.800l1.800-1.800zM305.500 66.500l1.800 1.800l1.800-1.800z" fill="#666"/>
</svg>

<div class="tsep" style="left:7px"></div>
<div class="tsep" style="left:81px"></div>
<div class="tsep" style="left:145px"></div>
<div class="tsep" style="left:191px"></div>
<div class="tsep" style="left:256px"></div>
<div class="tsep" style="left:311px"></div>
<div class="tb" style="left:37px">Standard</div>
<div class="tb" style="left:109px">Manual</div>
<div class="tb" style="left:167px">Hole</div>
<div class="tb" style="left:218px">Specific</div>
<div class="tb" style="left:281px">Shape</div>
<div class="tb" style="left:338px">NC File</div>

<!-- prompt -->
<div id="prompt" class="abs"></div>
<div class="t" style="left:54px;top:80px;font-size:7.4px;color:#222">Select Function or Icon?</div>
<div id="combo" class="abs"></div>
<div class="t" style="left:186px;top:81px;font-size:7px;color:#8a8a8a">Enter a command</div>
<svg class="abs" style="left:266px;top:81px" width="8" height="6" viewBox="0 0 8 6"><path d="M1.5 1.5l2.5 2.5l2.5-2.5" fill="none" stroke="#666" stroke-width="0.9"/></svg>

<!-- left panel -->
<div id="panel" class="abs"></div>
<div class="abs" style="left:9px;top:98px;width:138px;height:22px;background:#f1f1f1"></div>
<div class="abs" style="left:24px;top:104px;width:36px;height:12px;background:#e4e4e4;border:1px solid #8c8c8c;border-bottom:none"></div>
<div class="abs" style="left:60px;top:115px;width:75px;height:1px;background:#8c8c8c"></div>
<div class="t" style="left:26px;top:107px;font-size:6.4px;color:#222;font-weight:bold">Machining</div>
<div class="abs" style="left:9px;top:120px;width:138px;height:13px;background:#fff;border:1px solid #c0c0c0;border-bottom-color:#aaa"></div>
<div class="t" style="left:10px;top:124px;font-size:5.6px;color:#9a9a9a">Search...</div>
<svg class="abs" style="left:137px;top:121px" width="10" height="10" viewBox="0 0 10 10"><circle cx="4" cy="4" r="2.8" fill="none" stroke="#888" stroke-width="0.8"/><path d="M6 6l3 3" stroke="#888" stroke-width="1"/></svg>
<div class="abs" style="left:9px;top:134px;width:138px;height:10px;background:#e2e2e2"></div>
<!--TREE-->
<div class="tr" style="left:31px;top:136px">5-Axis Machine</div>
<div class="tr" style="left:31px;top:145px">Material</div>
<div class="tr" style="left:31px;top:154px">Stock</div>
<div class="tr" style="left:31px;top:163px">Machining</div>
<div class="tr" style="left:40px;top:172px">Facing Pocket</div>
<div class="tr" style="left:40px;top:181px">SPC</div>
<div class="tr" style="left:40px;top:190px">SPC</div>
<div class="tr" style="left:40px;top:199px">Poc</div>
<div class="tr" style="left:40px;top:208px">Con</div>
<svg class="abs" style="left:9px;top:134px" width="45" height="82" viewBox="9 134 45 82">
<g fill="none" stroke="#8a8a8a" stroke-width="0.7">
<path d="M13.5 137l2 2l-2 2"/><path d="M12.5 165l2 2l2-2"/>
<path d="M23 173l2 2l-2 2"/><path d="M23 200l2 2l-2 2"/><path d="M23 209l2 2l-2 2"/>
</g>
<!-- 5-axis machine icon -->
<rect x="20.5" y="135.5" width="6" height="6.5" fill="#fff" stroke="#222" stroke-width="0.7"/><rect x="22" y="137" width="3" height="2.5" fill="#555"/><path d="M20 142.5h7.5" stroke="#222" stroke-width="1"/>
<!-- material -->
<ellipse cx="23.8" cy="149" rx="3.6" ry="2.6" fill="#9a9a9a" stroke="#666" stroke-width="0.4"/><path d="M22 147.5l2 1.5l3.5-3.5" stroke="#e02020" stroke-width="1.3" fill="none"/>
<!-- stock -->
<path d="M20.5 156l3.5-1.8l3.5 1.5v3l-3.5 1.8l-3.5-1.5z" fill="#8c8c8c" stroke="#555" stroke-width="0.4"/><path d="M20.5 156l3.5 1.5l3.5-1.8" fill="none" stroke="#ccc" stroke-width="0.5"/>
<!-- machining -->
<path d="M20.5 167l2-3l3 1l2-2v5l-4 2z" fill="#d88a8a" stroke="#a05050" stroke-width="0.4"/><path d="M24 163v4" stroke="#777" stroke-width="1"/>
<!-- facing pocket / poc / con -->
<g id="opi"><path d="M29.5 176l2-2.8h4l1.6 2.2v2l-3 1.3l-4.6-1z" fill="#e04040" stroke="#901818" stroke-width="0.4"/><path d="M30.5 175.5l1.6-1.6h3l1 1.4l-2.6 1z" fill="#f6b0b0"/></g>
<g transform="translate(0,27)"><path d="M29.5 176l2-2.800h4l1.600 2.200v2l-3 1.300l-4.600-1z" fill="#e04040" stroke="#901818" stroke-width="0.400"/><path d="M30.500 175.500l1.600-1.600h3l1 1.400l-2.600 1z" fill="#f6b0b0"/></g><g transform="translate(0,36)"><path d="M29.5 176l2-2.800h4l1.600 2.200v2l-3 1.300l-4.600-1z" fill="#e04040" stroke="#901818" stroke-width="0.400"/><path d="M30.500 175.500l1.600-1.600h3l1 1.400l-2.600 1z" fill="#f6b0b0"/></g>
<!-- SPC icons -->
<g id="spc"><rect x="29.8" y="180.8" width="6.2" height="6.4" rx="0.8" fill="#fff" stroke="#223a8a" stroke-width="0.8"/><path d="M31.3 182.5h1.5v3h-1.5M34.5 182.5v3M33.5 184h1" stroke="#223a8a" stroke-width="0.7" fill="none"/></g>
<g transform="translate(0,9)"><rect x="29.800" y="180.800" width="6.200" height="6.400" rx="0.800" fill="#fff" stroke="#223a8a" stroke-width="0.800"/><path d="M31.300 182.500h1.500v3h-1.500M34.500 182.500v3M33.500 184h1" stroke="#223a8a" stroke-width="0.700" fill="none"/></g>
</svg>


<!-- side buttons -->
<div class="sb" style="top:99px;height:30px"></div>
<div class="sb" style="top:131px;height:29px"></div>
<!--SIDEICONS-->
<svg class="abs" style="left:154px;top:99px" width="30" height="61" viewBox="154 99 30 61">
<path d="M164.5 110.5h2.5v8h-2.5z" fill="#b0b0b0" stroke="#808080" stroke-width="0.4"/><path d="M164.5 112h2.5M164.5 114h2.5M164.5 116h2.5" stroke="#808080" stroke-width="0.4"/>
<rect x="167.3" y="109" width="7.6" height="6.2" fill="#fff" stroke="#3048a8" stroke-width="0.7"/><path d="M169.8 110.3l3.4 1.8l-3.4 1.8z" fill="#3048a8"/>
<path d="M166 140h7.6v5.8c0 2.4-2 4-3.8 5c-1.8-1-3.8-2.6-3.8-5z" fill="#4a64b8" stroke="#2a3f90" stroke-width="0.4"/><path d="M167.5 142l1 1l-1 1M172 142l-1 1l1 1M168.5 146.5h2.6" stroke="#cfd8f4" stroke-width="0.5" fill="none"/>
</svg>


<!-- context menu -->
<div id="ctx" class="abs">
<div class="abs" style="left:1px;top:61px;width:122px;height:13px;background:#91c9f7"></div>
<div class="ci" style="top:4px">Open</div>
<div class="ci" style="top:17.5px">Edit</div>
<div class="ci" style="top:31.5px">Save as..</div>
<div class="ci" style="top:44.5px">Edit NC file</div>
<div class="csep" style="top:57px"></div>
<div class="ci" style="top:64.5px">Fixed Tools</div>
<div class="ci" style="top:77.5px">Prepared Tools</div>
<div class="ci" style="top:91.5px">Tools Gauges</div>
<div class="csep" style="top:104px"></div>
<div class="ci" style="top:111.5px">Compacting Tools in DB</div>
<div class="csep" style="top:124px"></div>
<div class="ci" style="top:130.5px">Delete</div>
</div>
<!--CTXICONS-->
<svg class="abs" style="left:51px;top:179px" width="126" height="143" viewBox="51 179 126 143">
<!-- open -->
<path d="M54 184h4l1 1.2h5.5v7H54z" fill="#e9b92a" stroke="#a87a10" stroke-width="0.4"/><path d="M54 192.2l1.8-5h9.6l-1.6 5z" fill="#f8dc5a" stroke="#a87a10" stroke-width="0.4"/><path d="M57 184c1-2.2 4-2.8 6-1.2" stroke="#2a58b8" stroke-width="1.3" fill="none"/><path d="M61.6 181.4l2.6 1.8l-2.8 1.2z" fill="#2a58b8"/>
<!-- edit -->
<path d="M54 206.5l1.5-9h7.5l-1 9z" fill="#111"/><rect x="55" y="196.3" width="8" height="6" fill="#f4f4e8" stroke="#222" stroke-width="0.5"/><path d="M57 203.5l6.2-6.8l1.8 1.6l-6.2 6.8l-2.4.8z" fill="#f2c81e" stroke="#7a5a00" stroke-width="0.4"/><path d="M63.2 196.7l1.2-1.2l1.8 1.6l-1.2 1.2z" fill="#d82a2a"/>
<!-- save as -->
<path d="M54 209h9.5l2 2v9.5H54z" fill="#4a5fc0" stroke="#2a3a90" stroke-width="0.4"/><rect x="56" y="209.4" width="6" height="3.6" fill="#dfe4f8"/><rect x="56" y="215.2" width="7.5" height="5" fill="#fff"/><path d="M57 217h5.5M57 218.8h5.5" stroke="#7a86c8" stroke-width="0.6"/>
<!-- edit nc file -->
<path d="M54 223h10v5.5c0 3-2.6 5-5 6c-2.4-1-5-3-5-6z" fill="#3a55b8" stroke="#22348a" stroke-width="0.4"/><path d="M57 231l6.4-7l1.8 1.6l-6.4 7l-2.4.8z" fill="#f2c81e" stroke="#7a5a00" stroke-width="0.4"/><path d="M63.4 224l1.2-1.2l1.8 1.6l-1.2 1.2z" fill="#d82a2a"/>
<!-- fixed tools -->
<g stroke="#2a3f9a" fill="none" stroke-width="1"><path d="M55 243v8.5M53.5 243h3M58.5 243.5v5M57.3 243.5h2.4"/><path d="M61.5 244.5v8M59.5 246h4"/><circle cx="61.5" cy="243.6" r="1" /><path d="M57.5 250c.6 2.4 2.4 3 4 3s3.4-.6 4-3M53.5 252.8h5"/></g>
<!-- prepared tools -->
<rect x="54.5" y="256.5" width="7" height="10.5" fill="#fff" stroke="#2a3f9a" stroke-width="0.7"/><rect x="61" y="258.5" width="3" height="8" fill="#c8d0f0" stroke="#2a3f9a" stroke-width="0.6"/><g stroke="#28a838" stroke-width="0.9" fill="none"><path d="M55.8 259l1 1l1.8-2"/><path d="M55.8 262l1 1l1.8-2"/><path d="M55.8 265l1 1l1.8-2"/></g>
<!-- tools gauges -->
<path d="M54.5 272c0-1.6 1.2-2.4 2.6-2.4h4.8c1.4 0 2.6.8 2.6 2.4v8.6h-10z" fill="#fff" stroke="#2a3f9a" stroke-width="0.8"/><path d="M57.5 273v6.5M61 272.5v7M59.6 274.5h2.8" stroke="#2a3f9a" stroke-width="1" fill="none"/>
<!-- compacting -->
<rect x="54.5" y="289.5" width="6" height="5.5" fill="#fff" stroke="#2a3f9a" stroke-width="1"/><path d="M60.5 290h3.5v6.5h-2.5" fill="none" stroke="#2a3f9a" stroke-width="1.1"/><path d="M58.5 295v4M55.5 299.5h7" stroke="#2a3f9a" stroke-width="1.2"/><circle cx="58.5" cy="299.5" r="1.2" fill="#2a3f9a"/>
<!-- delete (eraser) -->
<path d="M53.8 315l5.4-6.2l5 3.4l-5.2 6.4c-1 .9-2.2.9-3.2.2l-1.6-1.1c-1-.7-1.1-1.8-.4-2.7z" fill="#3a55b8" stroke="#22348a" stroke-width="0.4"/><path d="M59.2 308.8l1.2-1.3c.8-.8 1.8-.9 2.7-.3l1.8 1.2c.9.6 1 1.6.4 2.5l-1.1 1.3z" fill="#e8ecfa" stroke="#22348a" stroke-width="0.4"/>
<!-- cursor -->
<path d="M99 243.5v8.2l1.9-1.7l1.3 3l1.2-.5l-1.3-2.9h2.6z" fill="#fff" stroke="#111" stroke-width="0.6"/>
</svg>


<!-- right toolbar icons -->
<!--RIGHTICONS-->
<svg class="abs" style="left:820px;top:28px" width="138" height="150" viewBox="820 28 138 150">
<!-- refresh -->
<g fill="none" stroke="#22b43a" stroke-width="2.6"><path d="M830 41a5 5 0 0 1 8.5-3.2"/><path d="M840 41a5 5 0 0 1-8.5 3.4"/></g><path d="M836.5 35l4.8 2.2l-4 3z" fill="#22b43a"/><path d="M833.5 47.4l-4.8-2.2l4-3z" fill="#22b43a"/><circle cx="840" cy="36" r="3" fill="#f59a1e"/><path d="M838.2 35.4h3.6" stroke="#ffe0a0" stroke-width="1"/>
<!-- caliper -->
<g fill="#2a2a2a"><rect x="847" y="36.8" width="14.5" height="2.6"/><path d="M847 36.8l1.2-2.3h1.3v2.3zM850.5 36.8v-2h1.2l.8 2zM847 39.4h2.6v5.6l-1.4 1.2l-1.2-2zM851 39.4h3v3.4l-1.5 3.6l-1.5-2z"/><rect x="857.5" y="35.8" width="4" height="4.6"/></g>
<!-- undo -->
<path d="M865.5 40.5l6.5-6v3.6c4.5 0 7.8 2.2 7.8 6.6c0 1.6-.6 3-1.4 3.8c.3-3.4-1.8-5.4-6.4-5.4v3.6z" fill="#262626"/>
<!-- redo -->
<path d="M901 40l-6.5-6v3.6c-4.5 0-7.8 2.2-7.8 6.6c0 1.6.6 3 1.4 3.8c-.3-3.4 1.8-5.4 6.4-5.4v3.6z" fill="#a8a8a8"/>
<!-- magnifier -->
<circle cx="910.5" cy="39" r="5" fill="#fff" stroke="#222" stroke-width="1.3"/><path d="M914 43l5.2 5" stroke="#222" stroke-width="2.4" stroke-linecap="round"/><path d="M907.6 38a3 3 0 0 1 2.4-2.4" stroke="#888" stroke-width="0.6" fill="none"/>
<!-- glasses -->
<rect x="924" y="31" width="18" height="17" rx="1" fill="#f0a020"/><g stroke="#3a2a10" fill="none" stroke-width="1"><path d="M926 41l2.8-5.5l1.6 1.4M940 41l-2.8-5.5l-1.6 1.4"/><path d="M925.8 41h14.4" stroke-width="1.4"/></g><path d="M926.2 41.4h5.8v2c0 1.6-1.2 2.8-2.9 2.8s-2.9-1.2-2.9-2.8zM934 41.4h5.8v2c0 1.6-1.2 2.8-2.9 2.8s-2.9-1.2-2.9-2.8z" fill="#3a2a10"/>
<!-- palette+wrench -->
<path d="M853.5 53c4.6 0 7.8 2.8 7.8 6.4c0 2.6-2 3.4-3.6 3c-1.6-.4-2.4.4-2 1.8c.4 1.6-.8 2.8-2.6 2.8c-3.8 0-6.6-3-6.600-6.800c0-4 3-7.200 7-7.200z" fill="#2a2a2a"/><g fill="#fff"><circle cx="850.500" cy="58" r="1.2"/><circle cx="854" cy="55.800" r="1.200"/><circle cx="857.800" cy="57.600" r="1.200"/><circle cx="850.800" cy="62.300" r="1.200"/></g><path d="M848 54.500l11.500 11" stroke="#fff" stroke-width="2.600"/><path d="M847.500 54l12 11.500" stroke="#2a2a2a" stroke-width="1.500"/><path d="M846.500 52.500l2.800.4l.4 2.800l-2 .4z" fill="#2a2a2a"/>
<!-- eraser -->
<path d="M866 62l7.400-8.200c.8-.8 1.800-.9 2.700-.3l3 2c.900.600 1 1.700.3 2.600l-7 8.400c-.800.800-1.800.900-2.700.300l-3.300-2.200c-.900-.600-1-1.700-.400-2.600z" fill="#fff" stroke="#222" stroke-width="0.900"/><path d="M866 62l4.200-4.700l6 4l-4 4.900c-.800.800-1.800.900-2.700.300l-3.300-2.200c-.900-.600-1-1.700-.200-2.300z" fill="#222"/>
<!-- magic hat -->
<path d="M887.500 59.500h10v6.500h-10z" fill="#222"/><path d="M886 66h13.500v1.600H886z" fill="#222"/><path d="M888 58.200h10" stroke="#222" stroke-width="1.300"/><path d="M892 57l9-4.600" stroke="#222" stroke-width="1.300"/><g fill="#222"><circle cx="888.500" cy="54.500" r=".8"/><circle cx="891" cy="52.500" r=".7"/><circle cx="890" cy="56.200" r=".6"/></g>
<!-- zoom extents -->
<circle cx="910.500" cy="59" r="5" fill="#fff" stroke="#222" stroke-width="1.300"/><path d="M914 63l5.200 5" stroke="#222" stroke-width="2.400" stroke-linecap="round"/><path d="M908 58v-1.600h1.600M911.400 56.400h1.600v1.600M913 60v1.600h-1.600M909.600 61.600h-1.600v-1.600" stroke="#222" stroke-width="0.700" fill="none"/>
<!-- eye -->
<path d="M926 61c2.400-3.600 5-5 7.800-5s5.400 1.400 7.800 5c-2.400 3.600-5 5-7.800 5s-5.400-1.400-7.800-5z" fill="#fff" stroke="#222" stroke-width="1.100"/><circle cx="933.800" cy="61" r="2.700" fill="#222"/><circle cx="932.800" cy="60" r=".8" fill="#fff"/><path d="M928 54.500c2-1.400 4-1.800 6-1.600M939.500 67.500c-2 1.400-4 1.800-6 1.600" stroke="#222" stroke-width="0.800" fill="none"/><path d="M933.500 51.800l2 1.200l-2 1.200zM934 70.200l-2-1.200l2-1.200z" fill="#222"/>
<!-- filter button -->
<rect x="945" y="97" width="13" height="17" fill="#dedede"/><path d="M947 100h10.500l-4 5v2.500h-2.500v-2.500z" fill="#3a50c0"/><path d="M951.200 108.500h2.200v2.200l-2.200-.6z" fill="#3a50c0"/>
<!-- side collapse -->
<rect x="945" y="142" width="13" height="25" fill="#e4e4e4"/><path d="M953 145l-4 3.500l4 3.500" stroke="#18a850" stroke-width="1.600" fill="none"/><path d="M947 158.500l5-1.500l6 1v5l-6 1.500l-5-2z" fill="#2a2a2a"/><path d="M951.500 158l6.500.8v4.600l-6.500 1z" fill="#9a9a9a"/>
</svg>
<!-- scale + axes -->
<svg class="abs" style="left:895px;top:375px" width="63" height="125" viewBox="895 375 63 125">
<path d="M946 380h3v40.500h-3" fill="none" stroke="#333" stroke-width="0.900"/><path d="M948 390h1M948 400h1M948 410h1" stroke="#333" stroke-width="0.600"/>
<path d="M909 471v-20" stroke="#10108a" stroke-width="2.600"/><path d="M904.500 455v-4.500l4.500-4.500l4.500 4.500v4.500z" fill="#10108a"/>
<path d="M909 471l15-9.500" stroke="#14b414" stroke-width="2.800"/><path d="M921 458l13.500-5.500l-6.500 13c-3 0-7-3.500-7-7.500z" fill="#14a014"/>
<path d="M909 471l16 10.500" stroke="#b01414" stroke-width="2.800"/><path d="M921.500 485l12 2.500l-5.500-11.500c-3.500 1-6 5-6.500 9z" fill="#a01010"/>
<text x="904.5" y="443.500" font-family="Liberation Sans, DejaVu Sans, sans-serif" font-size="9.500" font-weight="bold" fill="#1a1aa0" transform="translate(0,0)" textLength="8" lengthAdjust="spacingAndGlyphs">Z</text>
<text x="935" y="453.500" font-family="Liberation Sans, DejaVu Sans, sans-serif" font-size="10" fill="#22c022" textLength="7.500" lengthAdjust="spacingAndGlyphs">Y</text>
<text x="935.500" y="495.500" font-family="Liberation Sans, DejaVu Sans, sans-serif" font-size="9.500" fill="#d01818" textLength="7.500" lengthAdjust="spacingAndGlyphs">X</text>
</svg>
<div class="t" style="left:929px;top:421px;font-size:6px;color:#444">20 mm</div>


<!-- status bar -->
<div id="status" class="abs"></div>
<div class="st" style="left:4px;top:528px">Fixed Tools</div>
<div class="st" style="left:553px;top:528px">X =-191.161</div>
<div class="st" style="left:601px;top:528px">Y =-73.831</div>
<!--STATUSICONS-->
<svg class="abs" style="left:640px;top:522px" width="318" height="16" viewBox="640 522 318 16">
<rect x="648.500" y="525.500" width="11" height="10" fill="#e6e6e6" stroke="#9a9a9a" stroke-width="0.500"/><path d="M650 527.500h7.500M650 529.500h7.500M650 531.500h7.500M651.500 526.500v7M653.500 526.500v7M655.500 526.500v7" stroke="#4a5a9a" stroke-width="0.500"/><path d="M656.500 534l1.500 1.500l1.500-1.500z" fill="#222"/>
<rect x="667.500" y="527.500" width="6.500" height="6.500" fill="#fff" stroke="#444" stroke-width="0.700"/>
<rect x="679.500" y="524.500" width="93" height="12" fill="#e2e2e2" stroke="#b0b0b0" stroke-width="0.600"/>
<rect x="682.500" y="526.500" width="7" height="7.500" fill="#8c96c8" stroke="#4a5490" stroke-width="0.600"/><path d="M682.500 528h7" stroke="#fff" stroke-width="0.600"/>
<path d="M765.500 529.500l2 2l2-2" stroke="#555" stroke-width="0.800" fill="none"/>
<rect x="775.500" y="527.500" width="6.500" height="6.500" fill="#fff" stroke="#444" stroke-width="0.700"/>
<rect x="789" y="525.500" width="11.500" height="10.500" fill="#ff1010" stroke="#8a2a2a" stroke-width="0.500"/><path d="M802.500 530l2 2.200l2-2.200z" fill="#222"/>
<rect x="813.500" y="527.500" width="6.500" height="6.500" fill="#fff" stroke="#444" stroke-width="0.700"/>
<rect x="825.500" y="524.500" width="93" height="12" fill="#e2e2e2" stroke="#b0b0b0" stroke-width="0.600"/>
<path d="M829 529.500l3.500-1.500l3.500 1.500l-3.500 1.500zM829 531.500l3.500 1.500l3.500-1.500" fill="#444" stroke="#444" stroke-width="0.500"/>
<path d="M911 529.500l2 2l2-2" stroke="#555" stroke-width="0.800" fill="none"/>
<path d="M925 528l4.500-2l4.500 2v5l-4.500 2l-4.500-2z" fill="#eef" stroke="#3a4a9a" stroke-width="0.700"/><path d="M925 528l4.500 2l4.500-2M929.500 530v5" stroke="#3a4a9a" stroke-width="0.600" fill="none"/><path d="M933 535l1.500 1.500l1.500-1.500z" fill="#222"/>
<rect x="940" y="523.500" width="16" height="13.500" fill="#d4d4d4"/><circle cx="948" cy="530.500" r="4.200" fill="#9a9a9a"/>
</svg>
<div class="st" style="left:692px;top:528px;font-size:6.600px">#1 : REFERENCE</div>
<div class="st" style="left:839px;top:528px;font-size:6.600px">LAYER :&nbsp; 1</div>
<div class="st" style="left:946px;top:527.500px;font-size:6.600px;color:#e8e8e8;font-weight:bold">?</div>


<div id="frame"></div>
</body>
</html>
